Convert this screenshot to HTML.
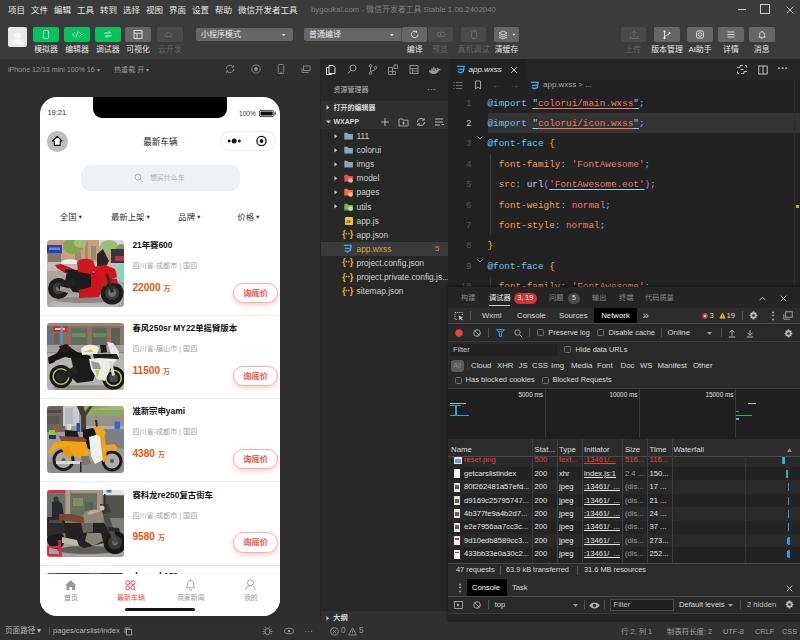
<!DOCTYPE html>
<html lang="zh-CN"><head><meta charset="utf-8"><title>微信开发者工具</title>
<style>
html,body{margin:0;padding:0;background:#2d2d2d;}
body{width:800px;height:640px;position:relative;overflow:hidden;font-family:"Liberation Sans","Noto Sans CJK SC",sans-serif;}
.r{position:absolute;display:block;}
.t{position:absolute;white-space:nowrap;}
.mono{font-family:"Liberation Mono","Noto Sans CJK SC",monospace;}
svg{overflow:visible}
</style></head><body>

<div class="r" style="left:0px;top:0px;width:800px;height:59px;background:#3b3b3b;"></div>
<div class="t" style="left:8px;top:4.00px;font-size:8.5px;line-height:12px;color:#e6e6e6;">项目</div>
<div class="t" style="left:31px;top:4.00px;font-size:8.5px;line-height:12px;color:#e6e6e6;">文件</div>
<div class="t" style="left:54px;top:4.00px;font-size:8.5px;line-height:12px;color:#e6e6e6;">编辑</div>
<div class="t" style="left:77px;top:4.00px;font-size:8.5px;line-height:12px;color:#e6e6e6;">工具</div>
<div class="t" style="left:100px;top:4.00px;font-size:8.5px;line-height:12px;color:#e6e6e6;">转到</div>
<div class="t" style="left:123px;top:4.00px;font-size:8.5px;line-height:12px;color:#e6e6e6;">选择</div>
<div class="t" style="left:146px;top:4.00px;font-size:8.5px;line-height:12px;color:#e6e6e6;">视图</div>
<div class="t" style="left:169px;top:4.00px;font-size:8.5px;line-height:12px;color:#e6e6e6;">界面</div>
<div class="t" style="left:192px;top:4.00px;font-size:8.5px;line-height:12px;color:#e6e6e6;">设置</div>
<div class="t" style="left:215px;top:4.00px;font-size:8.5px;line-height:12px;color:#e6e6e6;">帮助</div>
<div class="t" style="left:238px;top:4.00px;font-size:8.5px;line-height:12px;color:#e6e6e6;">微信开发者工具</div>
<div class="t" style="left:311px;top:4.00px;font-size:7.85px;line-height:12px;color:#808080;">bygoukai.com - 微信开发者工具 Stable 1.06.2402040</div>
<div class="r" style="left:738px;top:9px;width:8px;height:1px;background:#d0d0d0;"></div>
<div class="r" style="left:760px;top:4px;width:10px;height:10px;background:transparent;border:1px solid #d0d0d0;box-sizing:border-box;"></div>
<svg class="r" style="left:785.5px;top:5.5px;" width="8" height="8" viewBox="0 0 8 8"><path d="M0.5 0.5L7.5 7.5M7.5 0.5L0.5 7.5" stroke="#d0d0d0" stroke-width="0.9" fill="none"/></svg>
<div class="r" style="left:8px;top:27px;width:19px;height:20px;background:#e9e9e9;border-radius:2px;"></div>
<svg class="r" style="left:8px;top:27px;" width="19" height="20" viewBox="0 0 19 20"><circle cx="9.5" cy="8.5" r="3.2" fill="#f6f6f6"/><path d="M3 17.500c0-4 3-5.500 6.500-5.500S16 13.500 16 17.500z" fill="#f6f6f6"/></svg>
<div class="r" style="left:33px;top:27px;width:26px;height:15px;background:#07c160;border-radius:2px;"></div>
<svg class="r" style="left:33px;top:27px;" width="26" height="15" viewBox="0 0 26 15"><rect x="10.5" y="3.5" width="5" height="8" rx="1" fill="none" stroke="#fff" stroke-width="0.75"/></svg>
<div class="t" style="left:-104.0px;width:300px;text-align:center;top:43.50px;font-size:7.9px;line-height:12px;color:#e6e6e6;">模拟器</div>
<div class="r" style="left:64px;top:27px;width:26px;height:15px;background:#07c160;border-radius:2px;"></div>
<svg class="r" style="left:64px;top:27px;" width="26" height="15" viewBox="0 0 26 15"><path d="M10.5 5.5L8.5 7.5l2 2M15.5 5.5l2 2-2 2M14 4.5l-2 6" fill="none" stroke="#fff" stroke-width="0.75"/></svg>
<div class="t" style="left:-73.0px;width:300px;text-align:center;top:43.50px;font-size:7.9px;line-height:12px;color:#e6e6e6;">编辑器</div>
<div class="r" style="left:95px;top:27px;width:25.5px;height:15px;background:#07c160;border-radius:2px;"></div>
<svg class="r" style="left:95px;top:27px;" width="25.5" height="15" viewBox="0 0 25.5 15"><path d="M9.5 6h6M13.5 4.5l2 1.5M16.5 9h-6M12.5 10.5l-2-1.5" fill="none" stroke="#fff" stroke-width="0.75"/></svg>
<div class="t" style="left:-42.25px;width:300px;text-align:center;top:43.50px;font-size:7.9px;line-height:12px;color:#e6e6e6;">调试器</div>
<div class="r" style="left:125px;top:27px;width:26px;height:15px;background:#666666;border-radius:2px;"></div>
<svg class="r" style="left:125px;top:27px;" width="26" height="15" viewBox="0 0 26 15"><rect x="9" y="3.5" width="8" height="8" fill="none" stroke="#fff" stroke-width="0.75"/><path d="M9 6.3h8M12 6.3v5.2" stroke="#fff" stroke-width="0.75"/></svg>
<div class="t" style="left:-12.0px;width:300px;text-align:center;top:43.50px;font-size:7.9px;line-height:12px;color:#e6e6e6;">可视化</div>
<div class="r" style="left:157px;top:27px;width:26px;height:15px;background:#4a4a4a;border-radius:2px;"></div>
<svg class="r" style="left:157px;top:27px;" width="26" height="15" viewBox="0 0 26 15"><path d="M9.5 9.5c-1.5 0-1.8-2.3 0-2.5c.3-2 3-2.2 3.6-.5c1.8-.4 2.4 2.6.6 3z" fill="none" stroke="#777" stroke-width="0.7"/></svg>
<div class="t" style="left:20.0px;width:300px;text-align:center;top:43.50px;font-size:7.9px;line-height:12px;color:#666666;">云开发</div>
<div class="r" style="left:196px;top:27.6px;width:97px;height:13.8px;background:#666666;border-radius:2px;"></div>
<div class="t" style="left:201px;top:28.50px;font-size:8px;line-height:12px;color:#e6e6e6;">小程序模式</div>
<svg class="r" style="left:281.5px;top:33.5px;" width="3.6" height="2.2" viewBox="0 0 3.6 2.2"><path d="M0 0h3.6L1.8 2.2z" fill="#e6e6e6"/></svg>
<div class="r" style="left:304px;top:27.6px;width:97.4px;height:13.8px;background:#666666;border-radius:2px 0 0 2px;"></div>
<div class="r" style="left:401.4px;top:27.6px;width:0.6px;height:13.8px;background:#505050;"></div>
<div class="t" style="left:309px;top:28.50px;font-size:8px;line-height:12px;color:#e6e6e6;">普通编译</div>
<svg class="r" style="left:389.5px;top:33.5px;" width="3.6" height="2.2" viewBox="0 0 3.6 2.2"><path d="M0 0h3.6L1.8 2.2z" fill="#e6e6e6"/></svg>
<div class="r" style="left:402px;top:27px;width:25.3px;height:15px;background:#666666;border-radius:2px;"></div>
<svg class="r" style="left:402px;top:27px;" width="25.3" height="15" viewBox="0 0 25.3 15"><path d="M16 7.5a3.3 3.3 0 1 1-1.2-2.6" fill="none" stroke="#fff" stroke-width="0.75"/><path d="M14.2 3.6l1 1.6-1.8.4z" fill="#fff"/></svg>
<div class="t" style="left:264.65px;width:300px;text-align:center;top:43.50px;font-size:7.9px;line-height:12px;color:#e6e6e6;">编译</div>
<div class="r" style="left:427.5px;top:27px;width:25px;height:15px;background:#4a4a4a;border-radius:2px;"></div>
<svg class="r" style="left:427.5px;top:27px;" width="25" height="15" viewBox="0 0 25 15"><ellipse cx="13" cy="7.5" rx="4" ry="2.4" fill="none" stroke="#777" stroke-width="0.7"/><circle cx="13" cy="7.5" r="1" fill="#777"/></svg>
<div class="t" style="left:290.0px;width:300px;text-align:center;top:43.50px;font-size:7.9px;line-height:12px;color:#666666;">预览</div>
<div class="r" style="left:461px;top:27px;width:25px;height:15px;background:#4a4a4a;border-radius:2px;"></div>
<svg class="r" style="left:461px;top:27px;" width="25" height="15" viewBox="0 0 25 15"><rect x="10.5" y="4" width="5" height="7.5" rx="1" fill="none" stroke="#777" stroke-width="0.7"/><path d="M13 2.5v3" stroke="#777" stroke-width="0.7"/></svg>
<div class="t" style="left:323.5px;width:300px;text-align:center;top:43.50px;font-size:7.9px;line-height:12px;color:#666666;">真机调试</div>
<div class="r" style="left:494px;top:27px;width:25px;height:15px;background:#666666;border-radius:2px;"></div>
<svg class="r" style="left:494px;top:27px;" width="25" height="15" viewBox="0 0 25 15"><path d="M5 6l4-2 4 2-4 2zM5 8l4 2 4-2M5 10l4 2 4-2" fill="none" stroke="#fff" stroke-width="0.7"/><path d="M18.300 6.800h3.200l-1.600 2z" fill="#fff"/></svg>
<div class="t" style="left:356.5px;width:300px;text-align:center;top:43.50px;font-size:7.9px;line-height:12px;color:#e6e6e6;">清缓存</div>
<div class="r" style="left:620.5px;top:27px;width:25.5px;height:15px;background:#4a4a4a;border-radius:2px;"></div>
<svg class="r" style="left:620.5px;top:27px;" width="25.5" height="15" viewBox="0 0 25.5 15"><path d="M13 9.5v-5M11 6.2l2-2 2 2M9.5 9v2.5h7V9" fill="none" stroke="#777" stroke-width="0.7"/></svg>
<div class="t" style="left:483.25px;width:300px;text-align:center;top:43.50px;font-size:7.9px;line-height:12px;color:#666666;">上传</div>
<div class="r" style="left:654px;top:27px;width:26px;height:15px;background:#666666;border-radius:2px;"></div>
<svg class="r" style="left:654px;top:27px;" width="26" height="15" viewBox="0 0 26 15"><circle cx="10.5" cy="4.5" r="1" fill="#fff"/><circle cx="10.5" cy="11" r="1" fill="#fff"/><circle cx="15.5" cy="6" r="1" fill="#fff"/><path d="M10.5 4.5v6.5M15.5 6c0 2.5-5 2-5 4" fill="none" stroke="#fff" stroke-width="0.7"/></svg>
<div class="t" style="left:517.0px;width:300px;text-align:center;top:43.50px;font-size:7.9px;line-height:12px;color:#e6e6e6;">版本管理</div>
<div class="r" style="left:687px;top:27px;width:26px;height:15px;background:#666666;border-radius:2px;"></div>
<svg class="r" style="left:687px;top:27px;" width="26" height="15" viewBox="0 0 26 15"><rect x="9.5" y="4" width="7" height="7" rx="1.5" fill="none" stroke="#fff" stroke-width="0.75"/><circle cx="13" cy="7.5" r="1.8" fill="none" stroke="#fff" stroke-width="0.75"/></svg>
<div class="t" style="left:550.0px;width:300px;text-align:center;top:43.50px;font-size:7.9px;line-height:12px;color:#e6e6e6;">AI助手</div>
<div class="r" style="left:718px;top:27px;width:26px;height:15px;background:#666666;border-radius:2px;"></div>
<svg class="r" style="left:718px;top:27px;" width="26" height="15" viewBox="0 0 26 15"><path d="M9.5 5h7M9.5 7.5h7M9.5 10h7" stroke="#fff" stroke-width="0.75"/></svg>
<div class="t" style="left:581.0px;width:300px;text-align:center;top:43.50px;font-size:7.9px;line-height:12px;color:#e6e6e6;">详情</div>
<div class="r" style="left:749px;top:27px;width:25.5px;height:15px;background:#666666;border-radius:2px;"></div>
<svg class="r" style="left:749px;top:27px;" width="25.5" height="15" viewBox="0 0 25.5 15"><path d="M9.800 10.200c1.200-1 .6-3 1.200-4.300a2.200 2.200 0 0 1 4 0c.6 1.300 0 3.300 1.200 4.300z" fill="none" stroke="#fff" stroke-width="0.7"/><path d="M12.200 11.300a.9.900 0 0 0 1.600 0" fill="none" stroke="#fff" stroke-width="0.7"/></svg>
<div class="t" style="left:611.75px;width:300px;text-align:center;top:43.50px;font-size:7.9px;line-height:12px;color:#e6e6e6;">消息</div>
<div class="r" style="left:0px;top:59px;width:320px;height:21px;background:#2f2f2f;"></div>
<div class="t" style="left:8px;top:63.50px;font-size:7.1px;line-height:12px;color:#9a9a9a;">iPhone 12/13 mini 100% 16 <span style="font-size:6px">▾</span></div>
<div class="t" style="left:114px;top:63.50px;font-size:7.1px;line-height:12px;color:#9a9a9a;">热重载 开 <span style="font-size:6px">▾</span></div>
<svg class="r" style="left:224px;top:63px;" width="12" height="12" viewBox="0 0 12 12"><path d="M2.200 6a3.800 3.800 0 0 1 6.800-2.300M9.800 6a3.800 3.800 0 0 1-6.800 2.300" fill="none" stroke="#8c8c8c" stroke-width="0.9"/><path d="M9.600 2.200v2h-2M2.400 9.800v-2h2" fill="none" stroke="#8c8c8c" stroke-width="0.9"/></svg>
<svg class="r" style="left:250px;top:63px;" width="12" height="12" viewBox="0 0 12 12"><circle cx="6" cy="6" r="4.200" fill="none" stroke="#8c8c8c" stroke-width="0.9"/><circle cx="6" cy="6" r="1.900" fill="#8c8c8c"/></svg>
<svg class="r" style="left:275px;top:63px;" width="12" height="12" viewBox="0 0 12 12"><rect x="3.300" y="1.500" width="5.400" height="9" rx="1" fill="none" stroke="#8c8c8c" stroke-width="0.9"/><path d="M5 9.200h2" stroke="#8c8c8c" stroke-width="0.8"/></svg>
<svg class="r" style="left:300px;top:63px;" width="12" height="12" viewBox="0 0 12 12"><rect x="3.500" y="3" width="6.500" height="4.500" fill="none" stroke="#8c8c8c" stroke-width="0.9"/><path d="M2 5v4.500h6.500" fill="none" stroke="#8c8c8c" stroke-width="0.9"/></svg>
<div class="r" style="left:0px;top:80px;width:320px;height:542px;background:#2d2d2d;"></div>
<div class="r" id="phone" style="left:40.2px;top:97px;width:240px;height:519px;background:#fff;border-radius:17px;overflow:hidden;">
<div class="r" style="left:53.2px;top:-7px;width:134px;height:27.5px;background:#000;border-radius:9px;"></div>
<div class="t" style="left:7.200000000000003px;top:9.50px;font-size:7.5px;line-height:12px;color:#333;">19:21</div>
<div class="t" style="left:-84.30000000000001px;width:300px;text-align:right;top:10.50px;font-size:6.6px;line-height:12px;color:#333;">100%</div>
<svg class="r" style="left:219.2px;top:12.5px;" width="18" height="8" viewBox="0 0 18 8"><rect x="0.400" y="0.400" width="14.500" height="6.200" rx="1.500" fill="none" stroke="#222" stroke-width="0.8"/><rect x="1.600" y="1.600" width="12.100" height="3.800" rx="0.700" fill="#111"/><rect x="15.600" y="2.300" width="1.200" height="2.400" rx="0.500" fill="#222"/></svg>
<div class="r" style="left:7.200000000000003px;top:34px;width:20.5px;height:20.5px;background:#bdbdbd;border-radius:50%;"></div>
<svg class="r" style="left:7.200000000000003px;top:34px;" width="20.5" height="20.5" viewBox="0 0 20.5 20.5"><path d="M10.250 5.300l4.800 4.700h-1.900v4.400h-5.800v-4.400h-1.900z" fill="#fff" stroke="#111" stroke-width="1.100" stroke-linejoin="round"/></svg>
<div class="t" style="left:-29.799999999999997px;width:300px;text-align:center;top:38.50px;font-size:8.6px;line-height:12px;color:#222;">最新车辆</div>
<div class="r" style="left:180.2px;top:34px;width:56px;height:20px;background:#fff;border-radius:10px;border:1px solid #ebebeb;box-sizing:border-box;"></div>
<svg class="r" style="left:180.2px;top:34px;" width="56" height="20" viewBox="0 0 56 20"><circle cx="9.200" cy="10" r="1.500" fill="#111"/><circle cx="14.200" cy="10" r="2.500" fill="#111"/><circle cx="19.300" cy="10" r="1.500" fill="#111"/><circle cx="41.500" cy="10" r="4.600" fill="none" stroke="#111" stroke-width="1.300"/><circle cx="41.500" cy="10" r="1.900" fill="#111"/></svg>
<div class="r" style="left:41.2px;top:68px;width:159px;height:25.5px;background:#f0f1f5;border-radius:9px;"></div>
<svg class="r" style="left:93.7px;top:76px;" width="10" height="10" viewBox="0 0 10 10"><circle cx="4" cy="4" r="3" fill="none" stroke="#aaa" stroke-width="0.9"/><path d="M6.200 6.200l2.800 2.800" stroke="#aaa" stroke-width="0.9"/></svg>
<div class="t" style="left:109.7px;top:75.00px;font-size:7px;line-height:12px;color:#b0b0b0;">想买什么车</div>
<div class="t" style="left:-118.8px;width:300px;text-align:center;top:114.00px;font-size:8.4px;line-height:12px;color:#333;">全国<span style="font-size:5.5px;position:relative;top:-1px;margin-left:1px;">▼</span></div>
<div class="t" style="left:-59.3px;width:300px;text-align:center;top:114.00px;font-size:8.4px;line-height:12px;color:#333;">最新上架<span style="font-size:5.5px;position:relative;top:-1px;margin-left:1px;">▼</span></div>
<div class="t" style="left:-0.30000000000001137px;width:300px;text-align:center;top:114.00px;font-size:8.4px;line-height:12px;color:#333;">品牌<span style="font-size:5.5px;position:relative;top:-1px;margin-left:1px;">▼</span></div>
<div class="t" style="left:58.69999999999999px;width:300px;text-align:center;top:114.00px;font-size:8.4px;line-height:12px;color:#333;">价格<span style="font-size:5.5px;position:relative;top:-1px;margin-left:1px;">▼</span></div>
<svg class="r" style="left:7.200000000000003px;top:143.0px;border-radius:3px;overflow:hidden;" width="77" height="67" viewBox="0 0 77 67"><defs><filter id="b1" x="-5%" y="-5%" width="110%" height="110%"><feGaussianBlur stdDeviation="0.5"/></filter></defs><g filter="url(#b1)"><rect x="-2" y="-2" width="81" height="71" fill="#a9a5a2"/>
<rect x="-2" y="-2" width="81" height="27" fill="#c9a07c"/>
<rect x="38" y="2" width="3" height="20" fill="#a88a70"/><rect x="44" y="6" width="5" height="14" fill="#9a8674"/><rect x="28" y="12" width="6" height="10" fill="#9a8674"/>
<rect x="0" y="5" width="15" height="8.500" fill="#2b41b5"/><rect x="2" y="7.500" width="11" height="2.500" fill="#6f86e0"/>
<rect x="1" y="13.500" width="13" height="11" fill="#85756c"/>
<ellipse cx="26" cy="6" rx="10" ry="8" fill="#86a552"/><ellipse cx="33" cy="3" rx="6" ry="5" fill="#a2bf70"/>
<rect x="52" y="-2" width="27" height="8" fill="#cfd9e2"/>
<ellipse cx="62" cy="7" rx="9" ry="7" fill="#9dbd72"/><ellipse cx="74" cy="10" rx="5" ry="6" fill="#7f9f5a"/>
<rect x="-2" y="22" width="81" height="9" fill="#c4bbb1"/>
<ellipse cx="23" cy="23" rx="9" ry="3.800" fill="#ececec"/><rect x="16" y="24" width="14" height="2.500" fill="#b8b8b8"/>
<rect x="64" y="9" width="13" height="14" fill="#3a3340"/><rect x="68" y="16" width="9" height="5" fill="#b83040"/>
<rect x="70" y="24" width="9" height="18" rx="2" fill="#8fd0c2"/>
<ellipse cx="38" cy="64" rx="36" ry="5" fill="#bab6b3"/>
<ellipse cx="38" cy="60" rx="30" ry="3" fill="#8c8886"/>
<circle cx="11.500" cy="48.500" r="10.500" fill="#1a1a1a"/><circle cx="11.500" cy="48.500" r="6" fill="#3c3c3c"/><circle cx="11.500" cy="48.500" r="2.500" fill="#777"/>
<circle cx="65" cy="53" r="11.500" fill="#1a1a1a"/><circle cx="65" cy="53" r="7" fill="#3a3a3a"/><circle cx="65" cy="53" r="4" fill="#6e6e6e"/>
<path d="M20 31l10-1 18 3 4 16-6 5-20-2-8-10z" fill="#1d1a1b"/><path d="M10 46l16-8 4 6-16 8z" fill="#242224"/>
<path d="M8 25l6-1 8 3 8 4-2 3-10-1-8-5z" fill="#c5121c"/>
<path d="M18 29l12 1 6 3-6 3-12-4z" fill="#1b1b1d"/>
<path d="M30 22c4-4 12-4 16-1l3 8-6 5-12-2z" fill="#cf1822"/>
<path d="M50 14l6-5 6 12-4 7-8-2z" fill="#2a2226"/>
<path d="M46 27l12-2 10 4 2 8-6 2-6 8-4-6-6-6z" fill="#d0141e"/>
<path d="M44 33l10 2 2 10-4 12-20 1 0-8 12-3z" fill="#c9121b"/>
<path d="M62 38l8 1 1 5-8-1z" fill="#c8121c"/>
<path d="M59 36l3 0 5 16-3 1z" fill="#2a2a2a"/>
<path d="M13 46l11 3 1 5-12-3z" fill="#9a9896"/>
<circle cx="60" cy="35" r="1.500" fill="#333"/></g></svg>
<div class="t" style="left:92.2px;top:142.00px;font-size:8.4px;line-height:12px;color:#111;font-weight:700;">21年赛600</div>
<div class="t" style="left:92.2px;top:163.00px;font-size:7.1px;line-height:12px;color:#a2a2a2;">四川省-成都市 | 国四</div>
<div class="t" style="left:92.2px;top:184.50px;font-size:10.2px;line-height:12px;color:#e4570f;font-weight:700;">22000 <span style="font-size:7px;">万</span></div>
<div class="r" style="left:193.2px;top:185.5px;width:44.5px;height:20.5px;background:#fff;border-radius:10.5px;border:1px solid #f5b0ab;box-sizing:border-box;box-shadow:0 2px 4px rgba(229,77,66,.28);"></div>
<div class="t" style="left:65.39999999999998px;width:300px;text-align:center;top:189.80px;font-size:8.3px;line-height:12px;color:#e5534a;font-weight:700;">询底价</div>
<div class="r" style="left:0.20000000000000284px;top:218.0px;width:241px;height:0.6px;background:#e9e9e9;"></div>
<svg class="r" style="left:7.200000000000003px;top:226.2px;border-radius:3px;overflow:hidden;" width="77" height="67" viewBox="0 0 77 67"><defs><filter id="b2" x="-5%" y="-5%" width="110%" height="110%"><feGaussianBlur stdDeviation="0.5"/></filter></defs><g filter="url(#b2)"><rect x="-2" y="-2" width="81" height="71" fill="#b7b3ae"/>
<rect x="-2" y="-2" width="81" height="25" fill="#7c7069"/>
<rect x="-2" y="-2" width="81" height="5" fill="#9a8676"/>
<rect x="0" y="3" width="5" height="18" fill="#68727a"/>
<rect x="6" y="3" width="14.500" height="6" fill="#cf2f2f"/><rect x="8" y="5" width="10" height="2" fill="#f0c8c8"/>
<rect x="7" y="10" width="5" height="11" fill="#5d665c"/>
<rect x="13.500" y="-2" width="2.200" height="25" fill="#5b8fd6"/>
<rect x="17" y="9" width="4" height="12" fill="#8a6a58"/>
<rect x="24" y="5" width="16" height="17" fill="#636e5c"/><rect x="25" y="10" width="14" height="4" fill="#6f8a5e"/>
<rect x="41" y="3" width="3.500" height="19" fill="#8a7364"/>
<rect x="45" y="5" width="15" height="17" fill="#5f6a5a"/><rect x="46" y="10" width="13" height="4" fill="#6a845c"/>
<rect x="60.500" y="3" width="3.500" height="19" fill="#8a7364"/>
<rect x="64" y="5" width="9" height="17" fill="#5a6058"/>
<rect x="73" y="3" width="6" height="20" fill="#8a7a6c"/>
<rect x="60" y="13" width="2" height="4" fill="#d04a3a"/><rect x="20" y="13" width="2" height="6" fill="#c0503c"/>
<rect x="-2" y="22" width="81" height="7.500" fill="#a69f97"/><rect x="-2" y="29" width="81" height="1.200" fill="#8c867e"/>
<ellipse cx="40" cy="65" rx="34" ry="3" fill="#8f8c88"/>
<circle cx="14" cy="53.500" r="11.500" fill="#141414"/><circle cx="14" cy="53.500" r="7.800" fill="none" stroke="#aebb3a" stroke-width="1.600"/><circle cx="14" cy="53.500" r="5" fill="#2c2c2c"/>
<circle cx="66.500" cy="55" r="11.500" fill="#141414"/><circle cx="66.500" cy="55" r="7.800" fill="none" stroke="#c0cc3c" stroke-width="1.600"/><circle cx="66.500" cy="55" r="4.500" fill="#4a4a4a"/>
<path d="M1 34l5-1 2 6-5 2z" fill="#1a1a1a"/>
<path d="M1 36l3-3 6-3 4-6 6-2 4 3 6 4 10 2 4 3-4 4-12-2-10-2-10 4-6 3z" fill="#191919"/><path d="M24 35l20 0 6 11-4 12-16 2-8-8 4-8z" fill="#1c1c1c"/><path d="M13 51l15-8 3 7-15 7z" fill="#232323"/>
<path d="M12 23l8-2 4 4-2 4-8-1z" fill="#1c1c1c"/>
<path d="M34 26c3-5 14-6 18-1l-2 6-15 1z" fill="#eeeeea"/><path d="M36 29l8-3 2 3z" fill="#c8d23c"/>
<path d="M53 22l6 0 1 7-6 1z" fill="#1c1c1c"/>
<path d="M60 19l6 1 6 9 0 6-8-4z" fill="#e4e8ea"/>
<path d="M46 31l24 0 2 5-24 4z" fill="#1b1b1b"/>
<path d="M42 36l10-1 18 1-6 8-6 14-8-2-6-10z" fill="#ebebe8"/>
<path d="M48 47l5-1-3 9z" fill="#c6d03a"/>

<path d="M62 38l3 0 3 14-3 1z" fill="#d8d8d8"/>
<path d="M44 38l8 2 2 6-8 0z" fill="#9a9a98"/></g></svg>
<div class="t" style="left:92.2px;top:225.20px;font-size:8.4px;line-height:12px;color:#111;font-weight:700;">春风250sr MY22单摇臂版本</div>
<div class="t" style="left:92.2px;top:246.20px;font-size:7.1px;line-height:12px;color:#a2a2a2;">四川省-眉山市 | 国四</div>
<div class="t" style="left:92.2px;top:267.70px;font-size:10.2px;line-height:12px;color:#e4570f;font-weight:700;">11500 <span style="font-size:7px;">万</span></div>
<div class="r" style="left:193.2px;top:268.7px;width:44.5px;height:20.5px;background:#fff;border-radius:10.5px;border:1px solid #f5b0ab;box-sizing:border-box;box-shadow:0 2px 4px rgba(229,77,66,.28);"></div>
<div class="t" style="left:65.39999999999998px;width:300px;text-align:center;top:273.00px;font-size:8.3px;line-height:12px;color:#e5534a;font-weight:700;">询底价</div>
<div class="r" style="left:0.20000000000000284px;top:301.2px;width:241px;height:0.6px;background:#e9e9e9;"></div>
<svg class="r" style="left:7.200000000000003px;top:309.4px;border-radius:3px;overflow:hidden;" width="77" height="67" viewBox="0 0 77 67"><defs><filter id="b3" x="-5%" y="-5%" width="110%" height="110%"><feGaussianBlur stdDeviation="0.5"/></filter></defs><g filter="url(#b3)"><rect x="-2" y="-2" width="81" height="71" fill="#9f9c99"/>
<rect x="-2" y="-2" width="20" height="28" fill="#6b6460"/><rect x="0" y="4" width="14" height="3" fill="#4e4844"/><rect x="0" y="10" width="12" height="8" fill="#5a5450"/>
<rect x="16" y="-2" width="16" height="22" fill="#c8ccd0"/><rect x="18" y="2" width="8" height="16" fill="#b4b8bc"/>
<rect x="36" y="-2" width="43" height="14" fill="#8ea664"/><path d="M40 4l39-6v6z" fill="#a2b87a"/>
<rect x="38" y="10" width="41" height="13" fill="#9a9088"/><rect x="38" y="20" width="41" height="3" fill="#b0aca6"/>
<path d="M29 -2h7l2 8 6-8h3l-8 12v16h-5v-16z" fill="#463c36"/>
<rect x="29.500" y="17" width="3.500" height="9" fill="#2450b0"/>
<rect x="67.500" y="15.500" width="5.500" height="7.500" rx="1" fill="#2a68d4"/>
<path d="M44 23h35v20l-18-2z" fill="#7b7e88"/>
<rect x="-2" y="56" width="81" height="13" fill="#8d8b89"/>
<circle cx="9" cy="23" r="3.500" fill="#9a5a3c"/><rect x="2" y="24" width="6" height="6" rx="1" fill="#8ccc3c"/><rect x="2" y="29" width="7" height="4" fill="#2a3450"/>
<ellipse cx="22" cy="21" rx="2.500" ry="3" fill="#d8d8d8"/>
<path d="M18 24l12 1 2 6-14 0z" fill="#1a1a1a"/>
<path d="M36 24l10-2 4 6 0 10-6 6-8-4z" fill="#161616"/>
<circle cx="16.500" cy="54" r="11" fill="#1f1f1f"/><circle cx="16.500" cy="54" r="8" fill="#a8a8a6"/><circle cx="16.500" cy="54" r="2" fill="#555"/>
<circle cx="65" cy="55" r="10.500" fill="#1f1f1f"/><circle cx="65" cy="55" r="7.500" fill="#acacaa"/><circle cx="65" cy="55" r="2" fill="#555"/>
<path d="M12 30l24 1 4 3-2 3-24-2z" fill="#86483a"/>
<path d="M1 46l6-9 10-2 22 1 3 12-4 4-12-2-6-8-10 0-6 6z" fill="#f2a416"/>
<path d="M14 42l8-2 4 10-6 2z" fill="#e8980e"/>
<path d="M42 31l10-3 4 8 0 18-8 4-4-8z" fill="#efefed"/>
<path d="M47 20l8 1 4 6-2 4-8-2z" fill="#f2a416"/>
<path d="M53 30l5-1 2 26-4 1z" fill="#eea014"/>
<path d="M55 40l12-2 4 4-2 3-12-1z" fill="#f2a416"/>
<path d="M48 14l2 0 1 6-2 1z" fill="#2a2a2a"/>
<path d="M34 50l8 0 2 8-8 1z" fill="#767674"/>
<path d="M9 55l24 0 0 3-24 0z" fill="#d6d6d4"/>
<rect x="33" y="56" width="1.500" height="10" fill="#222"/></g></svg>
<div class="t" style="left:92.2px;top:308.40px;font-size:8.4px;line-height:12px;color:#111;font-weight:700;">准新宗申yami</div>
<div class="t" style="left:92.2px;top:329.40px;font-size:7.1px;line-height:12px;color:#a2a2a2;">四川省-成都市 | 国四</div>
<div class="t" style="left:92.2px;top:350.90px;font-size:10.2px;line-height:12px;color:#e4570f;font-weight:700;">4380 <span style="font-size:7px;">万</span></div>
<div class="r" style="left:193.2px;top:351.9px;width:44.5px;height:20.5px;background:#fff;border-radius:10.5px;border:1px solid #f5b0ab;box-sizing:border-box;box-shadow:0 2px 4px rgba(229,77,66,.28);"></div>
<div class="t" style="left:65.39999999999998px;width:300px;text-align:center;top:356.20px;font-size:8.3px;line-height:12px;color:#e5534a;font-weight:700;">询底价</div>
<div class="r" style="left:0.20000000000000284px;top:384.4px;width:241px;height:0.6px;background:#e9e9e9;"></div>
<svg class="r" style="left:7.200000000000003px;top:392.6px;border-radius:3px;overflow:hidden;" width="77" height="67" viewBox="0 0 77 67"><defs><filter id="b4" x="-5%" y="-5%" width="110%" height="110%"><feGaussianBlur stdDeviation="0.5"/></filter></defs><g filter="url(#b4)"><rect x="-2" y="-2" width="81" height="71" fill="#908e8a"/>
<rect x="-2" y="-2" width="81" height="31" fill="#76776a"/>
<rect x="-2" y="-2" width="20" height="5" fill="#de2f3b"/>
<rect x="0" y="4" width="18" height="24" fill="#69726a"/>
<rect x="18.500" y="-2" width="4.500" height="31" fill="#b49d88"/>
<rect x="24" y="4" width="26" height="22" fill="#66705e"/><rect x="26" y="8" width="10" height="8" fill="#7d9068"/><rect x="38" y="12" width="8" height="8" fill="#58604f"/>
<rect x="24" y="0" width="26" height="3" fill="#a8957f"/>
<rect x="50" y="-2" width="5.500" height="31" fill="#a8957f"/>
<rect x="56" y="-2" width="23" height="7" fill="#dfe3e6"/><rect x="59.500" y="-1" width="5" height="3.500" rx="1" fill="#2f6fe2"/>
<rect x="56" y="6" width="23" height="23" fill="#50524a"/>
<rect x="-2" y="28" width="81" height="24" fill="#7e7c78"/>
<rect x="-2" y="52" width="81" height="17" fill="#a5a39f"/>
<ellipse cx="40" cy="60" rx="30" ry="4" fill="#5e5c5a"/>
<path d="M5 12l6-2 4 4 2 12-12 2z" fill="#2a2a2e"/><circle cx="9" cy="9" r="2.500" fill="#3a3430"/>
<circle cx="68" cy="52.500" r="11.500" fill="#181818"/><circle cx="68" cy="52.500" r="7" fill="#3a3834"/><circle cx="68" cy="52.500" r="3" fill="#6a665e"/>
<circle cx="9" cy="50" r="9" fill="#1a1a1a"/>
<path d="M0 27l16 0 2 4 0 12-18 3z" fill="#2b2b2a"/><path d="M2 30l13 0 0 3-13 0z" fill="#4a4a48"/>
<path d="M12 24l12 0 12 3 4 2-4 4-24-3z" fill="#7b4433"/>
<path d="M36 25c4-7 18-8 22-1l-2 8-18 1z" fill="#8f8877"/><path d="M40 23c4-3 10-4 14-2l-12 4z" fill="#b8b09e"/>
<path d="M53 14l8 0 3 8-8 3z" fill="#3a3836"/><circle cx="55" cy="18" r="2.500" fill="#c8c4bc"/>
<path d="M17 33l40 0 6 8-6 12-20 5-18-8z" fill="#222120"/>
<path d="M34 33l12 0 0 9-10 1z" fill="#68655a"/>
<path d="M40 43l14 0 2 8-10 5-8-5z" fill="#86827a"/>
<path d="M15 47l15 3 2 6-17-3z" fill="#bcb8b0"/>
<path d="M56 25l6 1 9 26-4 1-9-19z" fill="#4e4c48"/>
<path d="M61 37l11 1 1 4-11-1z" fill="#2c2c2c"/>
<path d="M57 4l1.500 0 0 12-1.500 0z" fill="#2a2a2a"/>
<path d="M11 50l2.500 0 1.500 14-3 0z" fill="#e02a36"/>
<path d="M0 56l12 0 0 2-12 0zM0 64l15 0 0 2.500-15 0z" fill="#e02a36"/>
<path d="M0 56l2 0 0 10-2 0z" fill="#e02a36"/></g></svg>
<div class="t" style="left:92.2px;top:391.60px;font-size:8.4px;line-height:12px;color:#111;font-weight:700;">赛科龙re250复古街车</div>
<div class="t" style="left:92.2px;top:412.60px;font-size:7.1px;line-height:12px;color:#a2a2a2;">四川省-成都市 | 国四</div>
<div class="t" style="left:92.2px;top:434.10px;font-size:10.2px;line-height:12px;color:#e4570f;font-weight:700;">9580 <span style="font-size:7px;">万</span></div>
<div class="r" style="left:193.2px;top:435.1px;width:44.5px;height:20.5px;background:#fff;border-radius:10.5px;border:1px solid #f5b0ab;box-sizing:border-box;box-shadow:0 2px 4px rgba(229,77,66,.28);"></div>
<div class="t" style="left:65.39999999999998px;width:300px;text-align:center;top:439.40px;font-size:8.3px;line-height:12px;color:#e5534a;font-weight:700;">询底价</div>
<div class="r" style="left:0.20000000000000284px;top:467.6px;width:241px;height:0.6px;background:#e9e9e9;"></div>
<svg class="r" style="left:7.200000000000003px;top:475.79999999999995px;border-radius:3px;overflow:hidden;" width="77" height="67" viewBox="0 0 77 67"><rect width="77" height="67" fill="#4a3c3a"/><rect x="0" y="0" width="10" height="4" fill="#e0383f"/><rect x="42" y="0" width="12" height="4" fill="#d03a40"/></svg>
<div class="t" style="left:92.2px;top:473.40px;font-size:8.4px;line-height:12px;color:#111;font-weight:700;">dayun k150</div>
<div class="t" style="left:92.2px;top:495.80px;font-size:7.1px;line-height:12px;color:#a2a2a2;">四川省-成都市 | 国四</div>
<div class="t" style="left:92.2px;top:517.30px;font-size:10.2px;line-height:12px;color:#e4570f;font-weight:700;">6800 <span style="font-size:7px;">万</span></div>
<div class="r" style="left:193.2px;top:518.3px;width:44.5px;height:20.5px;background:#fff;border-radius:10.5px;border:1px solid #f5b0ab;box-sizing:border-box;box-shadow:0 2px 4px rgba(229,77,66,.28);"></div>
<div class="t" style="left:65.39999999999998px;width:300px;text-align:center;top:522.60px;font-size:8.3px;line-height:12px;color:#e5534a;font-weight:700;">询底价</div>
<div class="r" style="left:-1.7999999999999972px;top:477.29999999999995px;width:244px;height:42px;background:#fff;box-shadow:0 -0.5px 1.5px rgba(0,0,0,.22);"></div>
<div class="t" style="left:-119.3px;width:300px;text-align:center;top:495.00px;font-size:7.0px;line-height:12px;color:#8a8a8a;">首页</div>
<div class="t" style="left:-59.3px;width:300px;text-align:center;top:495.00px;font-size:7.0px;line-height:12px;color:#e54d42;">最新车辆</div>
<div class="t" style="left:0.6999999999999886px;width:300px;text-align:center;top:495.00px;font-size:7.0px;line-height:12px;color:#9a9a9a;">商家新闻</div>
<div class="t" style="left:60.69999999999999px;width:300px;text-align:center;top:495.00px;font-size:7.0px;line-height:12px;color:#9a9a9a;">我的</div>
<svg class="r" style="left:24.700000000000003px;top:482.5px;" width="11.5" height="10.5" viewBox="0 0 11.5 10.5"><path d="M5.75 0.3l5.5 4.6-.5.7-.7-.5v5.2h-3v-3.300h-2.600v3.300h-3v-5.200l-.7.5-.5-.7z" fill="#9a9a9a"/></svg>
<svg class="r" style="left:85.2px;top:482.5px;" width="11" height="10.5" viewBox="0 0 11 10.5"><circle cx="2.700" cy="2.700" r="2" fill="none" stroke="#e54d42" stroke-width="1"/><circle cx="8" cy="2.700" r="2" fill="none" stroke="#e54d42" stroke-width="1"/><circle cx="2.700" cy="7.800" r="2" fill="none" stroke="#e54d42" stroke-width="1"/><circle cx="7.700" cy="7.500" r="1.800" fill="none" stroke="#e54d42" stroke-width="1"/><path d="M9 8.800l1.500 1.500" stroke="#e54d42" stroke-width="1"/></svg>
<svg class="r" style="left:145.2px;top:482px;" width="11" height="11.5" viewBox="0 0 11 11.5"><path d="M1.200 8.800c1.600-1.100 .9-3.500 1.500-5.200a2.900 2.900 0 0 1 5.600 0c.6 1.700-.1 4.100 1.500 5.200z" fill="none" stroke="#9a9a9a" stroke-width="0.9"/><path d="M4.300 10.200a1.200 1.200 0 0 0 2.400 0M5.500 0.300v1.200" fill="none" stroke="#9a9a9a" stroke-width="0.9"/></svg>
<svg class="r" style="left:205.2px;top:482px;" width="11" height="11.5" viewBox="0 0 11 11.5"><circle cx="5.500" cy="3.800" r="3" fill="none" stroke="#9a9a9a" stroke-width="0.9"/><path d="M0.800 11c.3-2.600 1.800-4 4.700-4.200M10.200 11c-.2-1.700-.9-2.900-2.100-3.600" fill="none" stroke="#9a9a9a" stroke-width="0.9"/></svg>
<div class="r" style="left:85.2px;top:511.29999999999995px;width:70px;height:2.8px;background:#111;border-radius:1.5px;"></div>
</div>
<div class="r" style="left:0px;top:622px;width:320px;height:18px;background:#2f2f2f;"></div>
<div class="t" style="left:5px;top:625.00px;font-size:7.6px;line-height:12px;color:#b5b5b5;">页面路径 ▾</div>
<div class="r" style="left:48.5px;top:627px;width:0.6px;height:8px;background:#555;"></div>
<div class="t" style="left:53px;top:625.00px;font-size:7.6px;line-height:12px;color:#b5b5b5;">pages/carslist/index</div>
<svg class="r" style="left:124px;top:626.5px;" width="9" height="9" viewBox="0 0 9 9"><rect x="2.500" y="2.500" width="5" height="5.500" fill="none" stroke="#b5b5b5" stroke-width="0.8"/><path d="M1 6.500v-5.500h5" fill="none" stroke="#b5b5b5" stroke-width="0.8"/></svg>
<svg class="r" style="left:262px;top:626px;" width="11" height="10" viewBox="0 0 11 10"><ellipse cx="5.500" cy="5.500" rx="2.400" ry="3.200" fill="none" stroke="#9a9a9a" stroke-width="0.8"/><path d="M1 3l2 1M1 8l2-1M10 3l-2 1M10 8l-2-1M.5 5.500h2.500M8 5.500h2.500M4 2l-1-1.500M7 2l1-1.500" stroke="#9a9a9a" stroke-width="0.7"/></svg>
<svg class="r" style="left:283px;top:626px;" width="12" height="10" viewBox="0 0 12 10"><ellipse cx="6" cy="5" rx="4.600" ry="2.800" fill="none" stroke="#9a9a9a" stroke-width="0.8"/><circle cx="6" cy="5" r="1.200" fill="#9a9a9a"/></svg>
<div class="t" style="left:304px;top:624.50px;font-size:9px;line-height:12px;color:#9a9a9a;">···</div>
<div class="r" style="left:320px;top:59px;width:480px;height:581px;background:#222222;"></div>
<div class="r" style="left:320px;top:59px;width:480px;height:21px;background:#262626;"></div>
<div class="r" style="left:320px;top:59px;width:1px;height:581px;background:#242424;"></div>
<svg class="r" style="left:325px;top:63px;" width="12" height="13" viewBox="0 0 12 13"><path d="M4 2.500h4l2 2v6h-6z" fill="none" stroke="#e6e6e6" stroke-width="1"/><path d="M4 4.500h-2.500v7h5v-1" fill="none" stroke="#e6e6e6" stroke-width="1"/></svg>
<svg class="r" style="left:346px;top:63px;" width="12" height="13" viewBox="0 0 12 13"><circle cx="7" cy="5" r="3" fill="none" stroke="#9a9a9a" stroke-width="1"/><path d="M4.800 7.200l-3 3.300" stroke="#9a9a9a" stroke-width="1"/></svg>
<svg class="r" style="left:367px;top:63px;" width="12" height="13" viewBox="0 0 12 13"><circle cx="3.500" cy="2.800" r="1.300" fill="none" stroke="#9a9a9a" stroke-width="0.9"/><circle cx="3.500" cy="10.200" r="1.300" fill="none" stroke="#9a9a9a" stroke-width="0.9"/><circle cx="8.500" cy="4.800" r="1.300" fill="none" stroke="#9a9a9a" stroke-width="0.9"/><path d="M3.500 4.100v4.800M8.500 6.100c0 2-5 1.400-5 2.800" fill="none" stroke="#9a9a9a" stroke-width="0.9"/></svg>
<svg class="r" style="left:387px;top:63px;" width="12" height="13" viewBox="0 0 12 13"><path d="M1.500 4.500h4v4h-4zM1.500 8.500v3h4v-3M5.500 8.500h3v3h-3M7 2h3.500v3.500h-3.500z" fill="none" stroke="#9a9a9a" stroke-width="0.9"/></svg>
<svg class="r" style="left:408px;top:63px;" width="12" height="13" viewBox="0 0 12 13"><rect x="2" y="2.500" width="8" height="8" fill="none" stroke="#9a9a9a" stroke-width="0.9"/><path d="M2 5.500h8M4.500 5.500v5M4.500 8h5.500" stroke="#9a9a9a" stroke-width="0.8"/></svg>
<svg class="r" style="left:428px;top:63px;" width="13" height="13" viewBox="0 0 13 13"><path d="M1 7.500c0 2.500 2 3.500 4.500 3.500c3 0 4.800-1.600 5.500-3.500c1 0 1.600-.5 1.800-1.200c-.7-.4-1.500-.3-2 0c-.1-.8-.6-1.400-1.200-1.700c-.5.600-.6 1.500-.2 2.200c-.5.400-1.200.500-2.400.5h-5.800z" fill="#9a9a9a"/><path d="M3 5.500h5v1.300h-5zM5 4h1.500v1.300h-1.500z" fill="#9a9a9a"/></svg>
<div class="r" style="left:448.5px;top:59px;width:77px;height:21px;background:#222222;"></div>
<svg class="r" style="left:455.5px;top:65px;" width="9.0" height="9.0" viewBox="0 0 9 9"><path d="M0.800 1.300h7.400l-.9 5.300-2.800 1.100-2.800-1.100M1.900 4.300h5.700" fill="none" stroke="#42a5f5" stroke-width="1.350" stroke-linejoin="miter"/></svg>
<div class="t" style="left:468.5px;top:63.50px;font-size:8.0px;line-height:12px;color:#e8e8e8;font-style:italic;">app.wxss</div>
<svg class="r" style="left:510px;top:65.5px;" width="8" height="8" viewBox="0 0 8 8"><path d="M1.200 1.200l5.600 5.600M6.800 1.200l-5.600 5.600" stroke="#e0e0e0" stroke-width="0.9"/></svg>
<svg class="r" style="left:735px;top:63px;" width="14" height="13" viewBox="0 0 14 13"><path d="M2 4.500h3v-2h3M10 2.500h1.500v2M12 8.500h-3v2h-3M4 10.500h-1.500v-2" fill="none" stroke="#d0d0d0" stroke-width="0.9"/><path d="M5.500 6.500h3" stroke="#d0d0d0" stroke-width="0.9"/></svg>
<svg class="r" style="left:757px;top:63.5px;" width="12" height="12" viewBox="0 0 12 12"><rect x="1.800" y="2" width="8.400" height="8" fill="none" stroke="#d0d0d0" stroke-width="0.9"/><path d="M6 2v8" stroke="#d0d0d0" stroke-width="0.9"/></svg>
<div class="t" style="left:777.5px;top:63.00px;font-size:10px;line-height:12px;color:#d0d0d0;font-weight:700;letter-spacing:0.3px;">···</div>
<div class="r" style="left:321px;top:80px;width:126.5px;height:544px;background:#272727;"></div>
<div class="r" style="left:321px;top:100.5px;width:126.5px;height:28px;background:#2f2f2f;"></div>
<div class="t" style="left:333.5px;top:83.50px;font-size:7.0px;line-height:12px;color:#bbbbbb;">资源管理器</div>
<div class="t" style="left:427px;top:83.00px;font-size:8.5px;line-height:12px;color:#bbbbbb;">···</div>
<svg class="r" style="left:326px;top:105.0px;" width="4.0" height="5.0" viewBox="0 0 4 5"><path d="M0.500 0l3 2.500-3 2.500z" fill="#c5c5c5"/></svg>
<div class="t" style="left:333.5px;top:101.50px;font-size:7.0px;line-height:12px;color:#d8d8d8;font-weight:700;">打开的编辑器</div>
<svg class="r" style="left:325.5px;top:119.7px;" width="5" height="4" viewBox="0 0 5 4"><path d="M0 0.500h5l-2.500 3z" fill="#c5c5c5"/></svg>
<div class="t" style="left:333.5px;top:115.70px;font-size:7.0px;line-height:12px;color:#d8d8d8;font-weight:700;">WXAPP</div>
<svg class="r" style="left:380px;top:116.5px;" width="10" height="10" viewBox="0 0 10 10"><path d="M5 1v8M1 5h8" stroke="#c5c5c5" stroke-width="0.9"/></svg>
<svg class="r" style="left:398px;top:116.5px;" width="11" height="10" viewBox="0 0 11 10"><path d="M1 2h3.500l1 1.200h4.500v5.800h-9z" fill="none" stroke="#c5c5c5" stroke-width="0.8"/><path d="M5.500 4.500v3M4 6h3" stroke="#c5c5c5" stroke-width="0.8"/></svg>
<svg class="r" style="left:416px;top:116.5px;" width="10" height="10" viewBox="0 0 10 10"><path d="M1.500 5a3.500 3.500 0 0 1 6.200-2.200M8.500 5a3.500 3.500 0 0 1-6.200 2.200" fill="none" stroke="#c5c5c5" stroke-width="0.9"/><path d="M8.200 1v2.200h-2.200M1.800 9v-2.200h2.200" fill="none" stroke="#c5c5c5" stroke-width="0.8"/></svg>
<svg class="r" style="left:434px;top:116.5px;" width="10" height="10" viewBox="0 0 10 10"><path d="M1 2h8M1 5h8M1 8h5" stroke="#c5c5c5" stroke-width="0.9"/><path d="M7.500 7.500h2.500M8.700 7.500" stroke="#c5c5c5" stroke-width="0.9"/></svg>
<svg class="r" style="left:334px;top:133.75px;" width="3.6" height="4.5" viewBox="0 0 4 5"><path d="M0.500 0l3 2.500-3 2.500z" fill="#c5c5c5"/></svg>
<svg class="r" style="left:343.5px;top:132.0px;" width="9.2" height="8" viewBox="0 0 9.2 8"><path d="M0.300 0.800h3.200l0.900 1.100h4.500v5.600h-8.600z" fill="#8ea4b4"/></svg>
<div class="t" style="left:356.5px;top:130.00px;font-size:8.4px;line-height:12px;color:#d0d0d0;">111</div>
<svg class="r" style="left:334px;top:147.85px;" width="3.6" height="4.5" viewBox="0 0 4 5"><path d="M0.500 0l3 2.500-3 2.500z" fill="#c5c5c5"/></svg>
<svg class="r" style="left:343.5px;top:146.1px;" width="9.2" height="8" viewBox="0 0 9.2 8"><path d="M0.300 0.800h3.200l0.900 1.100h4.500v5.600h-8.600z" fill="#8ea4b4"/></svg>
<div class="t" style="left:356.5px;top:144.10px;font-size:8.4px;line-height:12px;color:#d0d0d0;">colorui</div>
<svg class="r" style="left:334px;top:161.95px;" width="3.6" height="4.5" viewBox="0 0 4 5"><path d="M0.500 0l3 2.500-3 2.500z" fill="#c5c5c5"/></svg>
<svg class="r" style="left:343.5px;top:160.2px;" width="9.2" height="8" viewBox="0 0 9.2 8"><path d="M0.300 0.800h3.200l0.900 1.100h4.500v5.600h-8.600z" fill="#8ea4b4"/></svg>
<div class="t" style="left:356.5px;top:158.20px;font-size:8.4px;line-height:12px;color:#d0d0d0;">imgs</div>
<svg class="r" style="left:334px;top:176.05px;" width="3.6" height="4.5" viewBox="0 0 4 5"><path d="M0.500 0l3 2.500-3 2.500z" fill="#c5c5c5"/></svg>
<svg class="r" style="left:343.5px;top:174.3px;" width="9.2" height="8" viewBox="0 0 9.2 8"><path d="M0.300 0.800h3.200l0.900 1.100h4.500v5.600h-8.600z" fill="#e5534b"/></svg>
<svg class="r" style="left:347.6px;top:177.60000000000002px;" width="5" height="5" viewBox="0 0 5 5"><circle cx="2.500" cy="2.500" r="2.300" fill="#f7b0a8"/></svg>
<div class="t" style="left:356.5px;top:172.30px;font-size:8.4px;line-height:12px;color:#d0d0d0;">model</div>
<svg class="r" style="left:334px;top:190.15px;" width="3.6" height="4.5" viewBox="0 0 4 5"><path d="M0.500 0l3 2.500-3 2.500z" fill="#c5c5c5"/></svg>
<svg class="r" style="left:343.5px;top:188.4px;" width="9.2" height="8" viewBox="0 0 9.2 8"><path d="M0.300 0.800h3.200l0.900 1.100h4.500v5.600h-8.600z" fill="#f0733c"/></svg>
<svg class="r" style="left:347.6px;top:191.70000000000002px;" width="5" height="5" viewBox="0 0 5 5"><circle cx="2.500" cy="2.500" r="2.300" fill="#f9c0a0"/></svg>
<div class="t" style="left:356.5px;top:186.40px;font-size:8.4px;line-height:12px;color:#d0d0d0;">pages</div>
<svg class="r" style="left:334px;top:204.25px;" width="3.6" height="4.5" viewBox="0 0 4 5"><path d="M0.500 0l3 2.500-3 2.500z" fill="#c5c5c5"/></svg>
<svg class="r" style="left:343.5px;top:202.5px;" width="9.2" height="8" viewBox="0 0 9.2 8"><path d="M0.300 0.800h3.200l0.900 1.100h4.500v5.600h-8.600z" fill="#7cb342"/></svg>
<svg class="r" style="left:347.6px;top:205.8px;" width="5" height="5" viewBox="0 0 5 5"><circle cx="2.500" cy="2.500" r="2.300" fill="#c5e1a5"/></svg>
<div class="t" style="left:356.5px;top:200.50px;font-size:8.4px;line-height:12px;color:#d0d0d0;">utils</div>
<div class="r" style="left:344.5px;top:216.6px;width:8px;height:8px;background:#f2c037;border-radius:1px;"></div>
<div class="t" style="left:346px;top:218.60px;font-size:3.8px;line-height:6px;color:#444;font-weight:700;">JS</div>
<div class="t" style="left:356.5px;top:214.60px;font-size:8.4px;line-height:12px;color:#d0d0d0;">app.js</div>
<div class="t" style="left:342.3px;top:228.20px;font-size:9px;line-height:12px;color:#e8b730;font-weight:700;letter-spacing:-0.7px;">{··}</div>
<div class="t" style="left:356.5px;top:228.70px;font-size:8.4px;line-height:12px;color:#d0d0d0;">app.json</div>
<div class="r" style="left:321px;top:242.0px;width:126.5px;height:13.7px;background:#3a3a3a;"></div>
<svg class="r" style="left:343px;top:244.3px;" width="9.0" height="9.0" viewBox="0 0 9 9"><path d="M0.800 1.300h7.400l-.9 5.300-2.800 1.100-2.800-1.100M1.900 4.300h5.700" fill="none" stroke="#42a5f5" stroke-width="1.350" stroke-linejoin="miter"/></svg>
<div class="t" style="left:356.5px;top:242.80px;font-size:8.4px;line-height:12px;color:#d3a734;">app.wxss</div>
<div class="t" style="left:435px;top:242.80px;font-size:8px;line-height:12px;color:#c79a2a;">5</div>
<div class="t" style="left:342.3px;top:256.40px;font-size:9px;line-height:12px;color:#e8b730;font-weight:700;letter-spacing:-0.7px;">{··}</div>
<div class="t" style="left:356.5px;top:256.90px;font-size:8.4px;line-height:12px;color:#d0d0d0;">project.config.json</div>
<div class="t" style="left:342.3px;top:270.50px;font-size:9px;line-height:12px;color:#e8b730;font-weight:700;letter-spacing:-0.7px;">{··}</div>
<div class="t" style="left:356.5px;top:271.00px;font-size:8.4px;line-height:12px;color:#d0d0d0;">project.private.config.js...</div>
<div class="t" style="left:342.3px;top:284.60px;font-size:9px;line-height:12px;color:#e8b730;font-weight:700;letter-spacing:-0.7px;">{··}</div>
<div class="t" style="left:356.5px;top:285.10px;font-size:8.4px;line-height:12px;color:#d0d0d0;">sitemap.json</div>
<div class="r" style="left:321px;top:611px;width:126.5px;height:13px;background:#303030;"></div>
<svg class="r" style="left:326px;top:615.55px;" width="3.6" height="4.5" viewBox="0 0 4 5"><path d="M0.500 0l3 2.500-3 2.500z" fill="#c5c5c5"/></svg>
<div class="t" style="left:333px;top:611.80px;font-size:7.4px;line-height:12px;color:#d8d8d8;font-weight:700;">大纲</div>
<div class="r" style="left:447.5px;top:80px;width:352.5px;height:209px;background:#222222;"></div>
<svg class="r" style="left:453px;top:80.5px;" width="10" height="9" viewBox="0 0 10 9"><path d="M0.500 1.500h1M3 1.500h6.500M0.500 4.500h1M3 4.500h6.500M0.500 7.500h1M3 7.500h6.500" stroke="#7a7a7a" stroke-width="0.9"/></svg>
<svg class="r" style="left:474px;top:80px;" width="8" height="10" viewBox="0 0 8 10"><path d="M1.500 1h5v8l-2.500-2-2.500 2z" fill="none" stroke="#b0b0b0" stroke-width="0.9"/></svg>
<div class="t" style="left:492px;top:78.60px;font-size:10px;line-height:12px;color:#5a5a5a;">←</div>
<div class="t" style="left:509.5px;top:78.60px;font-size:10px;line-height:12px;color:#5a5a5a;">→</div>
<svg class="r" style="left:530px;top:80.5px;" width="9.0" height="9.0" viewBox="0 0 9 9"><path d="M0.800 1.300h7.400l-.9 5.300-2.800 1.100-2.800-1.100M1.900 4.300h5.700" fill="none" stroke="#42a5f5" stroke-width="1.350" stroke-linejoin="miter"/></svg>
<div class="t" style="left:543px;top:79.00px;font-size:8px;line-height:12px;color:#a8a8a8;">app.wxss <span style="font-size:7px;">&gt;</span> ...</div>
<div class="r" style="left:487.5px;top:113px;width:312.5px;height:20px;background:#333333;"></div>
<div class="r" style="left:489.5px;top:154px;width:0.7px;height:81px;background:#3c3c3c;"></div>
<div class="r" style="left:489.5px;top:277px;width:0.7px;height:12px;background:#3c3c3c;"></div>
<div class="r" style="left:796px;top:204.5px;width:3px;height:3px;background:#d4a72c;"></div>
<div class="r" style="left:793.5px;top:80px;width:0.6px;height:209px;background:#2e2e2e;"></div>
<div class="r" style="left:447.500px;top:80px;width:352.500px;height:209px;overflow:hidden;">
<div class="t mono" style="left:0;width:24px;text-align:right;top:16.50px;font-size:9.200px;line-height:14px;color:#555555;">1</div>
<div class="t mono" style="left:40px;top:16.50px;font-size:9.350px;line-height:14px;white-space:pre;color:#ccc;"><span style="color:#6fc3e8;">@import</span> <span style="color:#8ad0f0;text-decoration:underline;text-decoration-color:#8ad0f0;text-decoration-thickness:0.7px;text-underline-offset:2px;">"</span><span style="color:#f07a6c;text-decoration:underline;text-decoration-color:#f07a6c;text-decoration-thickness:0.7px;text-underline-offset:2px;">colorui/main.wxss</span><span style="color:#8ad0f0;text-decoration:underline;text-decoration-color:#8ad0f0;text-decoration-thickness:0.7px;text-underline-offset:2px;">"</span><span style="color:#6fc3e8;">;</span></div>
<div class="t mono" style="left:0;width:24px;text-align:right;top:36.92px;font-size:9.200px;line-height:14px;color:#c6c6c6;">2</div>
<div class="t mono" style="left:40px;top:36.92px;font-size:9.350px;line-height:14px;white-space:pre;color:#ccc;"><span style="color:#6fc3e8;">@import</span> <span style="color:#8ad0f0;text-decoration:underline;text-decoration-color:#8ad0f0;text-decoration-thickness:0.7px;text-underline-offset:2px;">"</span><span style="color:#f07a6c;text-decoration:underline;text-decoration-color:#f07a6c;text-decoration-thickness:0.7px;text-underline-offset:2px;">colorui/icon.wxss</span><span style="color:#8ad0f0;text-decoration:underline;text-decoration-color:#8ad0f0;text-decoration-thickness:0.7px;text-underline-offset:2px;">"</span><span style="color:#6fc3e8;">;</span></div>
<div class="t mono" style="left:0;width:24px;text-align:right;top:57.34px;font-size:9.200px;line-height:14px;color:#555555;">3</div>
<div class="t mono" style="left:40px;top:57.34px;font-size:9.350px;line-height:14px;white-space:pre;color:#ccc;"><span style="color:#6fc3e8;">@font-face</span> <span style="color:#f0c419;">{</span></div>
<div class="t mono" style="left:0;width:24px;text-align:right;top:77.76px;font-size:9.200px;line-height:14px;color:#555555;">4</div>
<div class="t mono" style="left:40px;top:77.76px;font-size:9.350px;line-height:14px;white-space:pre;color:#ccc;">  <span style="color:#f5a052;">font-family</span><span style="color:#6fc3e8;">:</span> <span style="color:#f07a6c;">'FontAwesome'</span><span style="color:#6fc3e8;">;</span></div>
<div class="t mono" style="left:0;width:24px;text-align:right;top:98.18px;font-size:9.200px;line-height:14px;color:#555555;">5</div>
<div class="t mono" style="left:40px;top:98.18px;font-size:9.350px;line-height:14px;white-space:pre;color:#ccc;">  <span style="color:#f5a052;">src</span><span style="color:#6fc3e8;">:</span> <span style="color:#d0d0e8;">url</span><span style="color:#d872d8;">(</span><span style="color:#f07a6c;text-decoration:underline;text-decoration-color:#8ad0f0;text-decoration-thickness:0.7px;text-underline-offset:2px;">'FontAwesome.eot'</span><span style="color:#d872d8;">)</span><span style="color:#6fc3e8;">;</span></div>
<div class="t mono" style="left:0;width:24px;text-align:right;top:118.60px;font-size:9.200px;line-height:14px;color:#555555;">6</div>
<div class="t mono" style="left:40px;top:118.60px;font-size:9.350px;line-height:14px;white-space:pre;color:#ccc;">  <span style="color:#f5a052;">font-weight</span><span style="color:#6fc3e8;">:</span> <span style="color:#f07a6c;">normal</span><span style="color:#6fc3e8;">;</span></div>
<div class="t mono" style="left:0;width:24px;text-align:right;top:139.02px;font-size:9.200px;line-height:14px;color:#555555;">7</div>
<div class="t mono" style="left:40px;top:139.02px;font-size:9.350px;line-height:14px;white-space:pre;color:#ccc;">  <span style="color:#f5a052;">font-style</span><span style="color:#6fc3e8;">:</span> <span style="color:#f07a6c;">normal</span><span style="color:#6fc3e8;">;</span></div>
<div class="t mono" style="left:0;width:24px;text-align:right;top:159.44px;font-size:9.200px;line-height:14px;color:#555555;">8</div>
<div class="t mono" style="left:40px;top:159.44px;font-size:9.350px;line-height:14px;white-space:pre;color:#ccc;"><span style="color:#f0c419;">}</span></div>
<div class="t mono" style="left:0;width:24px;text-align:right;top:179.86px;font-size:9.200px;line-height:14px;color:#555555;">9</div>
<div class="t mono" style="left:40px;top:179.86px;font-size:9.350px;line-height:14px;white-space:pre;color:#ccc;"><span style="color:#6fc3e8;">@font-face</span> <span style="color:#f0c419;">{</span></div>
<div class="t mono" style="left:0;width:24px;text-align:right;top:200.28px;font-size:9.200px;line-height:14px;color:#555555;">10</div>
<div class="t mono" style="left:40px;top:200.28px;font-size:9.350px;line-height:14px;white-space:pre;color:#ccc;">  <span style="color:#f5a052;">font-family</span><span style="color:#6fc3e8;">:</span> <span style="color:#f07a6c;">'FontAwesome'</span><span style="color:#6fc3e8;">;</span></div>
</div>
<svg class="r" style="left:477px;top:136px;" width="6" height="4" viewBox="0 0 6 4"><path d="M0.500 0.500l2.500 2.500 2.500-2.500" fill="none" stroke="#9a9a9a" stroke-width="0.9"/></svg>
<svg class="r" style="left:477px;top:259px;" width="6" height="4" viewBox="0 0 6 4"><path d="M0.500 0.500l2.500 2.500 2.500-2.500" fill="none" stroke="#9a9a9a" stroke-width="0.9"/></svg>
<div class="r" style="left:447.5px;top:287px;width:352.5px;height:337px;background:#242424;box-shadow:0 -1px 3px rgba(0,0,0,.45);"></div>
<div class="t" style="left:461px;top:292.00px;font-size:7.2px;line-height:12px;color:#8a8a8a;">构建</div>
<div class="t" style="left:489px;top:292.00px;font-size:7.2px;line-height:12px;color:#f0f0f0;">调试器</div>
<div class="r" style="left:489px;top:305px;width:21px;height:1px;background:#d0d0d0;"></div>
<div class="r" style="left:514px;top:292.5px;width:22.5px;height:11px;background:#cf3535;border-radius:5.500px;"></div>
<div class="t" style="left:375.29999999999995px;width:300px;text-align:center;top:292.00px;font-size:7px;line-height:12px;color:#fff;">3, 19</div>
<div class="t" style="left:549px;top:292.00px;font-size:7.2px;line-height:12px;color:#8a8a8a;">问题</div>
<div class="r" style="left:568px;top:292.5px;width:12px;height:11px;background:#4a4a4a;border-radius:5.500px;"></div>
<div class="t" style="left:424px;width:300px;text-align:center;top:292.00px;font-size:7px;line-height:12px;color:#ddd;">5</div>
<div class="t" style="left:592px;top:292.00px;font-size:7.2px;line-height:12px;color:#8a8a8a;">输出</div>
<div class="t" style="left:619px;top:292.00px;font-size:7.2px;line-height:12px;color:#8a8a8a;">终端</div>
<div class="t" style="left:645px;top:292.00px;font-size:7.2px;line-height:12px;color:#8a8a8a;">代码质量</div>
<svg class="r" style="left:758.5px;top:295.5px;" width="7" height="5" viewBox="0 0 7 5"><path d="M0.500 4.200l3-3 3 3" fill="none" stroke="#ccc" stroke-width="0.9"/></svg>
<svg class="r" style="left:779.5px;top:294.5px;" width="7" height="7" viewBox="0 0 7 7"><path d="M0.700 0.700l5.600 5.600M6.300 0.700l-5.600 5.600" stroke="#ccc" stroke-width="0.9"/></svg>
<div class="r" style="left:447.5px;top:308px;width:352.5px;height:15px;background:#2c2c2c;"></div>
<svg class="r" style="left:454px;top:310.5px;" width="10" height="10" viewBox="0 0 10 10"><path d="M8.500 4v-2.500h-7.500v7h2.500" fill="none" stroke="#c8c8c8" stroke-width="0.8" stroke-dasharray="1.400 0.800"/><path d="M4.500 4.500l4.500 1.800-1.900.7 1.700 1.700-.7.700-1.700-1.700-.7 1.900z" fill="#c8c8c8"/></svg>
<div class="r" style="left:469.5px;top:311px;width:0.6px;height:9px;background:#555;"></div>
<div class="t" style="left:482px;top:309.50px;font-size:7.8px;line-height:12px;color:#dcdcdc;">Wxml</div>
<div class="t" style="left:517px;top:309.50px;font-size:7.8px;line-height:12px;color:#dcdcdc;">Console</div>
<div class="t" style="left:559px;top:309.50px;font-size:7.8px;line-height:12px;color:#dcdcdc;">Sources</div>
<div class="r" style="left:594px;top:308px;width:43px;height:15px;background:#000;"></div>
<div class="t" style="left:465.5px;width:300px;text-align:center;top:309.50px;font-size:7.8px;line-height:12px;color:#fff;">Network</div>
<div class="t" style="left:642.5px;top:308.60px;font-size:11.5px;line-height:12px;color:#c8c8c8;">»</div>
<svg class="r" style="left:702px;top:312.5px;" width="6" height="6" viewBox="0 0 6 6"><circle cx="3" cy="3" r="2.700" fill="#e8453c"/><path d="M1.900 1.900l2.200 2.200M4.100 1.900l-2.200 2.200" stroke="#fff" stroke-width="0.6"/></svg>
<div class="t" style="left:709.5px;top:309.50px;font-size:7.8px;line-height:12px;color:#dcdcdc;">3</div>
<svg class="r" style="left:718.5px;top:312px;" width="7" height="7" viewBox="0 0 7 7"><path d="M3.500 0.600l3.200 5.800h-6.400z" fill="#f4bd00"/><path d="M3.500 2.600v2M3.500 5.200v.6" stroke="#333" stroke-width="0.6"/></svg>
<div class="t" style="left:726.5px;top:309.50px;font-size:7.8px;line-height:12px;color:#dcdcdc;">19</div>
<div class="r" style="left:741.5px;top:311px;width:0.6px;height:9px;background:#555;"></div>
<svg class="r" style="left:748.5px;top:311px;" width="9" height="9" viewBox="0 0 10 10"><path d="M5 0.600l.9.200.3 1.200.9.500 1.100-.4.700.8-.5 1.100.4.900 1.100.4v1l-1.100.4-.4.900.5 1.100-.7.800-1.100-.4-.9.500-.3 1.200h-1.800l-.3-1.200-.9-.5-1.100.4-.7-.8.500-1.100-.4-.9-1.100-.4v-1l1.100-.4.400-.9-.5-1.100.7-.8 1.100.4.900-.5.300-1.200z" fill="#b8b8b8" transform="translate(0.500 -0.300) scale(0.900)"/><circle cx="5" cy="5" r="1.500" fill="#333"/></svg>
<div class="t" style="left:768.3px;top:309.50px;font-size:10px;line-height:12px;color:#c0c0c0;font-weight:700;">⋮</div>
<svg class="r" style="left:783px;top:311px;" width="10" height="9" viewBox="0 0 10 9"><rect x="2.500" y="0.800" width="6.700" height="5.400" fill="none" stroke="#b8b8b8" stroke-width="0.8"/><path d="M0.800 3v5.200h6.200" fill="none" stroke="#b8b8b8" stroke-width="0.8"/></svg>
<div class="r" style="left:447.5px;top:323px;width:352.5px;height:0.7px;background:#4a4a4a;"></div>
<div class="r" style="left:447.5px;top:323.7px;width:352.5px;height:64.3px;background:#292929;"></div>
<svg class="r" style="left:454.5px;top:328.5px;" width="8" height="8" viewBox="0 0 8 8"><circle cx="4" cy="4" r="3.700" fill="#ea4335"/></svg>
<svg class="r" style="left:473px;top:328.5px;" width="8" height="8" viewBox="0 0 8 8"><circle cx="4" cy="4" r="3.300" fill="none" stroke="#b0b0b0" stroke-width="0.9"/><path d="M1.700 1.700l4.600 4.600" stroke="#b0b0b0" stroke-width="0.9"/></svg>
<div class="r" style="left:488px;top:328px;width:0.6px;height:9px;background:#555;"></div>
<svg class="r" style="left:495.5px;top:328.5px;" width="9" height="8" viewBox="0 0 9 8"><path d="M0.600 0.600h7.800l-2.900 3.400v3.200l-2 .4v-3.600z" fill="none" stroke="#3b9cff" stroke-width="1"/><path d="M2.600 2.300h3.800" stroke="#3b9cff" stroke-width="0.800"/></svg>
<svg class="r" style="left:514px;top:328.5px;" width="9" height="9" viewBox="0 0 9 9"><circle cx="3.500" cy="3.500" r="2.700" fill="none" stroke="#b0b0b0" stroke-width="0.9"/><path d="M5.500 5.500l2.800 2.800" stroke="#b0b0b0" stroke-width="1"/></svg>
<div class="r" style="left:529px;top:328px;width:0.6px;height:9px;background:#555;"></div>
<div class="r" style="left:536.5px;top:329.2px;width:7px;height:7px;background:transparent;border:1px solid #6e6e6e;box-sizing:border-box;border-radius:1.5px;"></div>
<div class="t" style="left:548.3px;top:326.70px;font-size:7.4px;line-height:12px;color:#dcdcdc;">Preserve log</div>
<div class="r" style="left:597px;top:329.2px;width:7px;height:7px;background:transparent;border:1px solid #6e6e6e;box-sizing:border-box;border-radius:1.5px;"></div>
<div class="t" style="left:608.5px;top:326.70px;font-size:7.4px;line-height:12px;color:#dcdcdc;">Disable cache</div>
<div class="r" style="left:660.5px;top:328px;width:0.6px;height:9px;background:#555;"></div>
<div class="t" style="left:667.5px;top:326.70px;font-size:7.8px;line-height:12px;color:#dcdcdc;">Online</div>
<svg class="r" style="left:707px;top:331.5px;" width="5" height="3" viewBox="0 0 5 3"><path d="M0 0h5l-2.500 3z" fill="#9a9a9a"/></svg>
<div class="r" style="left:720.5px;top:328px;width:0.6px;height:9px;background:#555;"></div>
<svg class="r" style="left:727.5px;top:328.5px;" width="8" height="9" viewBox="0 0 8 9"><path d="M4 6.500v-5.500M1.500 3.500l2.500-2.500 2.500 2.500M0.800 8h6.400" fill="none" stroke="#b0b0b0" stroke-width="1"/></svg>
<svg class="r" style="left:745.5px;top:328.5px;" width="8" height="9" viewBox="0 0 8 9"><path d="M4 0.800v5.500M1.500 3.800l2.500 2.500 2.500-2.500M0.800 8h6.400" fill="none" stroke="#b0b0b0" stroke-width="1"/></svg>
<svg class="r" style="left:784px;top:328.5px;" width="9" height="9" viewBox="0 0 10 10"><path d="M5 0.600l.9.200.3 1.200.9.500 1.100-.4.700.8-.5 1.100.4.900 1.100.4v1l-1.100.4-.4.900.5 1.100-.7.800-1.100-.4-.9.500-.3 1.200h-1.800l-.3-1.200-.9-.5-1.100.4-.7-.8.500-1.100-.4-.9-1.100-.4v-1l1.100-.4.400-.9-.5-1.100.7-.8 1.100.4.900-.5.300-1.200z" fill="#b8b8b8" transform="translate(0.500 -0.300) scale(0.900)"/><circle cx="5" cy="5" r="1.500" fill="#333"/></svg>
<div class="r" style="left:447.5px;top:341.3px;width:352.5px;height:0.6px;background:#3c3c3c;"></div>
<div class="r" style="left:450px;top:344px;width:107px;height:11.5px;background:#222222;"></div>
<div class="t" style="left:453px;top:344.00px;font-size:7.6px;line-height:12px;color:#c8c8c8;">Filter</div>
<div class="r" style="left:564px;top:346.0px;width:7px;height:7px;background:transparent;border:1px solid #6e6e6e;box-sizing:border-box;border-radius:1.5px;"></div>
<div class="t" style="left:575.5px;top:343.50px;font-size:7.35px;line-height:12px;color:#dcdcdc;">Hide data URLs</div>
<div class="r" style="left:450.5px;top:359.5px;width:13px;height:12px;background:#5a5a5a;border-radius:3px;"></div>
<div class="t" style="left:307px;width:300px;text-align:center;top:359.50px;font-size:7.4px;line-height:12px;color:#8a8a8a;">All</div>
<div class="r" style="left:466.5px;top:361px;width:0.6px;height:9px;background:#3c3c3c;"></div>
<div class="t" style="left:471px;top:359.50px;font-size:7.8px;line-height:12px;color:#dcdcdc;">Cloud</div>
<div class="t" style="left:497px;top:359.50px;font-size:7.8px;line-height:12px;color:#dcdcdc;">XHR</div>
<div class="t" style="left:518.5px;top:359.50px;font-size:7.8px;line-height:12px;color:#dcdcdc;">JS</div>
<div class="t" style="left:532px;top:359.50px;font-size:7.8px;line-height:12px;color:#dcdcdc;">CSS</div>
<div class="t" style="left:551px;top:359.50px;font-size:7.8px;line-height:12px;color:#dcdcdc;">Img</div>
<div class="t" style="left:571px;top:359.50px;font-size:7.8px;line-height:12px;color:#dcdcdc;">Media</div>
<div class="t" style="left:597px;top:359.50px;font-size:7.8px;line-height:12px;color:#dcdcdc;">Font</div>
<div class="t" style="left:620.5px;top:359.50px;font-size:7.8px;line-height:12px;color:#dcdcdc;">Doc</div>
<div class="t" style="left:640px;top:359.50px;font-size:7.8px;line-height:12px;color:#dcdcdc;">WS</div>
<div class="t" style="left:657.5px;top:359.50px;font-size:7.8px;line-height:12px;color:#dcdcdc;">Manifest</div>
<div class="t" style="left:693px;top:359.50px;font-size:7.8px;line-height:12px;color:#dcdcdc;">Other</div>
<div class="r" style="left:454.5px;top:376.5px;width:7px;height:7px;background:transparent;border:1px solid #6e6e6e;box-sizing:border-box;border-radius:1.5px;"></div>
<div class="t" style="left:465.5px;top:374.00px;font-size:7.55px;line-height:12px;color:#dcdcdc;">Has blocked cookies</div>
<div class="r" style="left:541.5px;top:376.5px;width:7px;height:7px;background:transparent;border:1px solid #6e6e6e;box-sizing:border-box;border-radius:1.5px;"></div>
<div class="t" style="left:552.5px;top:374.00px;font-size:7.35px;line-height:12px;color:#dcdcdc;">Blocked Requests</div>
<div class="r" style="left:447.5px;top:388px;width:352.5px;height:50.5px;background:#1f1f1f;"></div>
<div class="r" style="left:447.5px;top:388px;width:352.5px;height:0.6px;background:#3c3c3c;"></div>
<div class="r" style="left:544.5px;top:388px;width:0.6px;height:50px;background:#3a3a3a;"></div>
<div class="t" style="left:243.0px;width:300px;text-align:right;top:389.00px;font-size:6.4px;line-height:12px;color:#e0e0e0;">5000 ms</div>
<div class="r" style="left:639px;top:388px;width:0.6px;height:50px;background:#3a3a3a;"></div>
<div class="t" style="left:337.5px;width:300px;text-align:right;top:389.00px;font-size:6.4px;line-height:12px;color:#e0e0e0;">10000 ms</div>
<div class="r" style="left:735px;top:388px;width:0.6px;height:50px;background:#3a3a3a;"></div>
<div class="t" style="left:433.5px;width:300px;text-align:right;top:389.00px;font-size:6.4px;line-height:12px;color:#e0e0e0;">15000 ms</div>
<div class="r" style="left:449.5px;top:403px;width:16px;height:1.0px;background:#b0b8b8;"></div>
<div class="r" style="left:449.5px;top:405px;width:11px;height:1.2px;background:#22b5a0;"></div>
<div class="r" style="left:455px;top:405px;width:1.6px;height:10px;background:#2f9fdd;"></div>
<div class="r" style="left:449.5px;top:414.5px;width:6px;height:1.2px;background:#22b573;"></div>
<div class="r" style="left:455.5px;top:414.5px;width:13px;height:1.2px;background:#2f9fdd;"></div>
<div class="r" style="left:748px;top:403px;width:8px;height:1.2px;background:#c0c0c0;"></div>
<div class="r" style="left:735.5px;top:414.5px;width:16px;height:1.2px;background:#22b573;"></div>
<div class="r" style="left:735.5px;top:418px;width:3px;height:2px;background:#35b8c8;"></div>
<div class="r" style="left:735.5px;top:411px;width:3px;height:1.2px;background:#2f8fdd;"></div>
<div class="r" style="left:447.5px;top:438.5px;width:352.5px;height:0.6px;background:#4a4a4a;"></div>
<div class="r" style="left:447.5px;top:439px;width:352.5px;height:17px;background:#2b2b2b;"></div>
<div class="t" style="left:451px;top:443.50px;font-size:7.8px;line-height:12px;color:#dcdcdc;">Name</div>
<div class="t" style="left:534.5px;top:443.50px;font-size:7.8px;line-height:12px;color:#dcdcdc;">Stat...</div>
<div class="t" style="left:559px;top:443.50px;font-size:7.8px;line-height:12px;color:#dcdcdc;">Type</div>
<div class="t" style="left:584px;top:443.50px;font-size:7.8px;line-height:12px;color:#dcdcdc;">Initiator</div>
<div class="t" style="left:625px;top:443.50px;font-size:7.8px;line-height:12px;color:#dcdcdc;">Size</div>
<div class="t" style="left:649.5px;top:443.50px;font-size:7.8px;line-height:12px;color:#dcdcdc;">Time</div>
<div class="t" style="left:673.5px;top:443.50px;font-size:7.8px;line-height:12px;color:#dcdcdc;">Waterfall</div>
<svg class="r" style="left:786.5px;top:447.5px;" width="5" height="4" viewBox="0 0 5 4"><path d="M0 4h5l-2.500-4z" fill="#8a8a8a"/></svg>
<div class="r" style="left:447.5px;top:456px;width:352.5px;height:0.6px;background:#4a4a4a;"></div>
<div class="r" style="left:447.500px;top:456.600px;width:352.500px;height:105.900px;overflow:hidden;">
<div class="r" style="left:0.0px;top:-2.900000000000034px;width:352.5px;height:13.4px;background:#292929;"></div>
<div class="r" style="left:6.0px;top:-0.20000000000004547px;width:8px;height:8px;background:#dfe6ee;"></div>
<div class="r" style="left:7.0px;top:2.7999999999999545px;width:6px;height:4px;background:#6b9bd1;"></div>
<div class="t" style="left:16.5px;top:-2.20px;font-size:7.6px;line-height:12px;color:#e0443a;">reset.png</div>
<div class="t" style="left:87.0px;top:-2.20px;font-size:7.6px;line-height:12px;color:#e0443a;">500</div>
<div class="t" style="left:111.5px;top:-2.20px;font-size:7.6px;line-height:12px;color:#e0443a;">text...</div>
<div class="t" style="left:136.5px;top:-2.20px;font-size:7.6px;line-height:12px;color:#e0443a;text-decoration:underline;">:13461/...</div>
<div class="t" style="left:177.5px;top:-2.20px;font-size:7.6px;line-height:12px;color:#e0443a;">516...</div>
<div class="t" style="left:202.0px;top:-2.20px;font-size:7.6px;line-height:12px;color:#e0443a;">116...</div>
<div class="r" style="left:334.5px;top:-0.20000000000004547px;width:1px;height:8px;background:#22b573;"></div>
<div class="r" style="left:335.5px;top:-0.20000000000004547px;width:1.5px;height:8px;background:#35b8c8;"></div>
<div class="r" style="left:0.0px;top:10.499999999999943px;width:352.5px;height:13.4px;background:#232323;"></div>
<div class="r" style="left:6.0px;top:12.699999999999932px;width:6.5px;height:9px;background:#f2f2f2;"></div>
<div class="t" style="left:16.5px;top:11.20px;font-size:7.6px;line-height:12px;color:#e4e4e4;">getcarslistindex</div>
<div class="t" style="left:87.0px;top:11.20px;font-size:7.6px;line-height:12px;color:#e4e4e4;">200</div>
<div class="t" style="left:111.5px;top:11.20px;font-size:7.6px;line-height:12px;color:#e4e4e4;">xhr</div>
<div class="t" style="left:136.5px;top:11.20px;font-size:7.6px;line-height:12px;color:#e4e4e4;text-decoration:underline;">index.js:1</div>
<div class="t" style="left:177.5px;top:11.20px;font-size:7.6px;line-height:12px;color:#9a9a9a;">2.4 ...</div>
<div class="t" style="left:202.0px;top:11.20px;font-size:7.6px;line-height:12px;color:#e4e4e4;">150...</div>
<div class="r" style="left:338.0px;top:13.199999999999932px;width:1px;height:8px;background:#22b573;"></div>
<div class="r" style="left:339.0px;top:13.199999999999932px;width:1.5px;height:8px;background:#35b8c8;"></div>
<div class="r" style="left:0.0px;top:23.899999999999977px;width:352.5px;height:13.4px;background:#292929;"></div>
<div class="r" style="left:6.0px;top:26.099999999999966px;width:6.5px;height:9px;background:#e8e8e8;"></div>
<div class="r" style="left:7.0px;top:28.599999999999966px;width:4.5px;height:4px;background:#6a5a4a;"></div>
<div class="t" style="left:16.5px;top:24.60px;font-size:7.6px;line-height:12px;color:#e4e4e4;">80f262481a57efd...</div>
<div class="t" style="left:87.0px;top:24.60px;font-size:7.6px;line-height:12px;color:#e4e4e4;">200</div>
<div class="t" style="left:111.5px;top:24.60px;font-size:7.6px;line-height:12px;color:#e4e4e4;">jpeg</div>
<div class="t" style="left:136.5px;top:24.60px;font-size:7.6px;line-height:12px;color:#e4e4e4;text-decoration:underline;">:13461/_...</div>
<div class="t" style="left:177.5px;top:24.60px;font-size:7.6px;line-height:12px;color:#9a9a9a;">(dis...</div>
<div class="t" style="left:202.0px;top:24.60px;font-size:7.6px;line-height:12px;color:#e4e4e4;">17 ...</div>
<div class="r" style="left:340.0px;top:26.599999999999966px;width:1.6px;height:8px;background:#2f8fdd;"></div>
<div class="r" style="left:0.0px;top:37.299999999999955px;width:352.5px;height:13.4px;background:#232323;"></div>
<div class="r" style="left:6.0px;top:39.49999999999994px;width:6.5px;height:9px;background:#e8e8e8;"></div>
<div class="r" style="left:7.0px;top:41.99999999999994px;width:4.5px;height:4px;background:#6a5a4a;"></div>
<div class="t" style="left:16.5px;top:38.00px;font-size:7.6px;line-height:12px;color:#e4e4e4;">d9169c25795747...</div>
<div class="t" style="left:87.0px;top:38.00px;font-size:7.6px;line-height:12px;color:#e4e4e4;">200</div>
<div class="t" style="left:111.5px;top:38.00px;font-size:7.6px;line-height:12px;color:#e4e4e4;">jpeg</div>
<div class="t" style="left:136.5px;top:38.00px;font-size:7.6px;line-height:12px;color:#e4e4e4;text-decoration:underline;">:13461/_...</div>
<div class="t" style="left:177.5px;top:38.00px;font-size:7.6px;line-height:12px;color:#9a9a9a;">(dis...</div>
<div class="t" style="left:202.0px;top:38.00px;font-size:7.6px;line-height:12px;color:#e4e4e4;">21 ...</div>
<div class="r" style="left:340.0px;top:39.99999999999994px;width:1.6px;height:8px;background:#2f8fdd;"></div>
<div class="r" style="left:0.0px;top:50.69999999999999px;width:352.5px;height:13.4px;background:#292929;"></div>
<div class="r" style="left:6.0px;top:52.89999999999998px;width:6.5px;height:9px;background:#e8e8e8;"></div>
<div class="r" style="left:7.0px;top:55.39999999999998px;width:4.5px;height:4px;background:#6a5a4a;"></div>
<div class="t" style="left:16.5px;top:51.40px;font-size:7.6px;line-height:12px;color:#e4e4e4;">4b377fe9a4b2d7...</div>
<div class="t" style="left:87.0px;top:51.40px;font-size:7.6px;line-height:12px;color:#e4e4e4;">200</div>
<div class="t" style="left:111.5px;top:51.40px;font-size:7.6px;line-height:12px;color:#e4e4e4;">jpeg</div>
<div class="t" style="left:136.5px;top:51.40px;font-size:7.6px;line-height:12px;color:#e4e4e4;text-decoration:underline;">:13461/_...</div>
<div class="t" style="left:177.5px;top:51.40px;font-size:7.6px;line-height:12px;color:#9a9a9a;">(dis...</div>
<div class="t" style="left:202.0px;top:51.40px;font-size:7.6px;line-height:12px;color:#e4e4e4;">24 ...</div>
<div class="r" style="left:340.0px;top:53.39999999999998px;width:1.6px;height:8px;background:#2f8fdd;"></div>
<div class="r" style="left:0.0px;top:64.09999999999991px;width:352.5px;height:13.4px;background:#232323;"></div>
<div class="r" style="left:6.0px;top:66.29999999999995px;width:6.5px;height:9px;background:#e8e8e8;"></div>
<div class="r" style="left:7.0px;top:68.79999999999995px;width:4.5px;height:4px;background:#6a5a4a;"></div>
<div class="t" style="left:16.5px;top:64.80px;font-size:7.6px;line-height:12px;color:#e4e4e4;">e2e7956aa7cc3c...</div>
<div class="t" style="left:87.0px;top:64.80px;font-size:7.6px;line-height:12px;color:#e4e4e4;">200</div>
<div class="t" style="left:111.5px;top:64.80px;font-size:7.6px;line-height:12px;color:#e4e4e4;">jpeg</div>
<div class="t" style="left:136.5px;top:64.80px;font-size:7.6px;line-height:12px;color:#e4e4e4;text-decoration:underline;">:13461/_...</div>
<div class="t" style="left:177.5px;top:64.80px;font-size:7.6px;line-height:12px;color:#9a9a9a;">(dis...</div>
<div class="t" style="left:202.0px;top:64.80px;font-size:7.6px;line-height:12px;color:#e4e4e4;">37 ...</div>
<div class="r" style="left:340.0px;top:66.79999999999995px;width:1.6px;height:8px;background:#2f8fdd;"></div>
<div class="r" style="left:0.0px;top:77.49999999999989px;width:352.5px;height:13.4px;background:#292929;"></div>
<div class="r" style="left:6.0px;top:79.69999999999993px;width:6.5px;height:9px;background:#f2f2f2;"></div>
<div class="r" style="left:7.0px;top:81.69999999999993px;width:4.5px;height:1.5px;background:#d0322d;"></div>
<div class="t" style="left:16.5px;top:78.20px;font-size:7.6px;line-height:12px;color:#e4e4e4;">9d10edb8589cc3...</div>
<div class="t" style="left:87.0px;top:78.20px;font-size:7.6px;line-height:12px;color:#e4e4e4;">200</div>
<div class="t" style="left:111.5px;top:78.20px;font-size:7.6px;line-height:12px;color:#e4e4e4;">jpeg</div>
<div class="t" style="left:136.5px;top:78.20px;font-size:7.6px;line-height:12px;color:#e4e4e4;text-decoration:underline;">:13461/_...</div>
<div class="t" style="left:177.5px;top:78.20px;font-size:7.6px;line-height:12px;color:#9a9a9a;">(dis...</div>
<div class="t" style="left:202.0px;top:78.20px;font-size:7.6px;line-height:12px;color:#e4e4e4;">273...</div>
<div class="r" style="left:340.5px;top:80.19999999999993px;width:1.6px;height:8px;background:#2f8fdd;"></div>
<div class="r" style="left:339.0px;top:81.19999999999993px;width:1.5px;height:6px;background:#35b8c8;"></div>
<div class="r" style="left:0.0px;top:90.89999999999986px;width:352.5px;height:13.4px;background:#232323;"></div>
<div class="r" style="left:6.0px;top:93.09999999999991px;width:6.5px;height:9px;background:#f2f2f2;"></div>
<div class="r" style="left:7.0px;top:95.09999999999991px;width:4.5px;height:1.5px;background:#d0322d;"></div>
<div class="t" style="left:16.5px;top:91.60px;font-size:7.6px;line-height:12px;color:#e4e4e4;">433bb33e0a30c2...</div>
<div class="t" style="left:87.0px;top:91.60px;font-size:7.6px;line-height:12px;color:#e4e4e4;">200</div>
<div class="t" style="left:111.5px;top:91.60px;font-size:7.6px;line-height:12px;color:#e4e4e4;">jpeg</div>
<div class="t" style="left:136.5px;top:91.60px;font-size:7.6px;line-height:12px;color:#e4e4e4;text-decoration:underline;">:13461/_...</div>
<div class="t" style="left:177.5px;top:91.60px;font-size:7.6px;line-height:12px;color:#9a9a9a;">(dis...</div>
<div class="t" style="left:202.0px;top:91.60px;font-size:7.6px;line-height:12px;color:#e4e4e4;">252...</div>
<div class="r" style="left:340.5px;top:93.59999999999991px;width:1.6px;height:8px;background:#2f8fdd;"></div>
<div class="r" style="left:339.0px;top:94.59999999999991px;width:1.5px;height:6px;background:#35b8c8;"></div>
</div>
<div class="r" style="left:532px;top:439px;width:0.6px;height:123.5px;background:#3e3e3e;"></div>
<div class="r" style="left:557px;top:439px;width:0.6px;height:123.5px;background:#3e3e3e;"></div>
<div class="r" style="left:582px;top:439px;width:0.6px;height:123.5px;background:#3e3e3e;"></div>
<div class="r" style="left:621.5px;top:439px;width:0.6px;height:123.5px;background:#3e3e3e;"></div>
<div class="r" style="left:646.5px;top:439px;width:0.6px;height:123.5px;background:#3e3e3e;"></div>
<div class="r" style="left:671.5px;top:439px;width:0.6px;height:123.5px;background:#3e3e3e;"></div>
<div class="r" style="left:745px;top:456px;width:0.5px;height:106.5px;background:#343434;"></div>
<div class="r" style="left:447.5px;top:562.5px;width:352.5px;height:15.5px;background:#2b2b2b;"></div>
<div class="r" style="left:447.5px;top:562.5px;width:352.5px;height:0.6px;background:#4a4a4a;"></div>
<div class="t" style="left:456px;top:564.00px;font-size:7.4px;line-height:12px;color:#dcdcdc;">47 requests</div>
<div class="r" style="left:499.5px;top:565.5px;width:0.6px;height:9px;background:#555;"></div>
<div class="t" style="left:506px;top:564.00px;font-size:7.4px;line-height:12px;color:#dcdcdc;">63.9 kB transferred</div>
<div class="r" style="left:577px;top:565.5px;width:0.6px;height:9px;background:#555;"></div>
<div class="t" style="left:584px;top:564.00px;font-size:7.4px;line-height:12px;color:#dcdcdc;">31.6 MB resources</div>
<div class="r" style="left:447.5px;top:577.5px;width:352.5px;height:0.7px;background:#4a4a4a;"></div>
<div class="r" style="left:447.5px;top:578px;width:352.5px;height:18px;background:#2c2c2c;"></div>
<div class="t" style="left:455px;top:581.50px;font-size:10px;line-height:12px;color:#c0c0c0;font-weight:700;">⋮</div>
<div class="r" style="left:467px;top:579px;width:39.5px;height:17px;background:#000;"></div>
<div class="t" style="left:336px;width:300px;text-align:center;top:582.00px;font-size:7.6px;line-height:12px;color:#fff;">Console</div>
<div class="t" style="left:512px;top:582.00px;font-size:7.6px;line-height:12px;color:#dcdcdc;">Task</div>
<svg class="r" style="left:785.5px;top:584.5px;" width="7" height="7" viewBox="0 0 7 7"><path d="M0.700 0.700l5.600 5.600M6.300 0.700l-5.600 5.600" stroke="#ccc" stroke-width="0.9"/></svg>
<div class="r" style="left:447.5px;top:596px;width:352.5px;height:0.6px;background:#4a4a4a;"></div>
<div class="r" style="left:447.5px;top:596.6px;width:352.5px;height:16.4px;background:#292929;"></div>
<svg class="r" style="left:453.5px;top:600.5px;" width="9" height="8" viewBox="0 0 9 8"><rect x="0.500" y="0.500" width="8" height="7" fill="none" stroke="#b0b0b0" stroke-width="0.8"/><path d="M3 2.300l2.600 1.700-2.600 1.700z" fill="#b0b0b0"/></svg>
<svg class="r" style="left:473px;top:600.5px;" width="8" height="8" viewBox="0 0 8 8"><circle cx="4" cy="4" r="3.300" fill="none" stroke="#b0b0b0" stroke-width="0.9"/><path d="M1.700 1.700l4.600 4.600" stroke="#b0b0b0" stroke-width="0.9"/></svg>
<div class="r" style="left:487.5px;top:600px;width:0.6px;height:9px;background:#555;"></div>
<div class="t" style="left:494.7px;top:598.90px;font-size:7.6px;line-height:12px;color:#dcdcdc;">top</div>
<svg class="r" style="left:573px;top:603.5px;" width="5" height="3" viewBox="0 0 5 3"><path d="M0 0h5l-2.500 3z" fill="#9a9a9a"/></svg>
<div class="r" style="left:583.5px;top:600px;width:0.6px;height:9px;background:#555;"></div>
<svg class="r" style="left:589px;top:600.5px;" width="11" height="9" viewBox="0 0 11 9"><path d="M0.300 4.500c2.300-4 8.100-4 10.400 0c-2.300 4-8.100 4-10.400 0z" fill="#b0b0b0"/><circle cx="5.500" cy="4.500" r="1.700" fill="#292929"/></svg>
<div class="r" style="left:603.5px;top:600px;width:0.6px;height:9px;background:#555;"></div>
<div class="r" style="left:609.5px;top:598.5px;width:64.5px;height:12px;background:#1f1f1f;border:1px solid #4a4a4a;box-sizing:border-box;"></div>
<div class="t" style="left:613.5px;top:598.70px;font-size:7.6px;line-height:12px;color:#c0c0c0;">Filter</div>
<div class="t" style="left:679px;top:598.70px;font-size:7.6px;line-height:12px;color:#dcdcdc;">Default levels</div>
<svg class="r" style="left:727.5px;top:603.5px;" width="5" height="3" viewBox="0 0 5 3"><path d="M0 0h5l-2.500 3z" fill="#9a9a9a"/></svg>
<div class="r" style="left:739.5px;top:600px;width:0.6px;height:9px;background:#555;"></div>
<div class="t" style="left:747px;top:598.70px;font-size:7.6px;line-height:12px;color:#c0c0c0;">2 hidden</div>
<svg class="r" style="left:784.5px;top:600px;" width="9" height="9" viewBox="0 0 10 10"><path d="M5 0.600l.9.200.3 1.200.9.500 1.100-.4.700.8-.5 1.100.4.900 1.100.4v1l-1.100.4-.4.900.5 1.100-.7.800-1.100-.4-.9.500-.3 1.200h-1.800l-.3-1.200-.9-.5-1.100.4-.7-.8.500-1.100-.4-.9-1.100-.4v-1l1.100-.4.400-.9-.5-1.100.7-.8 1.100.4.900-.5.300-1.200z" fill="#b8b8b8" transform="translate(0.500 -0.300) scale(0.900)"/><circle cx="5" cy="5" r="1.500" fill="#333"/></svg>
<div class="r" style="left:447.5px;top:613px;width:352.5px;height:0.6px;background:#3c3c3c;"></div>
<div class="r" style="left:447.5px;top:613.6px;width:352.5px;height:10.4px;background:#242424;"></div>
<div class="r" style="left:320px;top:621.7px;width:480px;height:18.3px;background:#303030;"></div>
<svg class="r" style="left:330.3px;top:626.7px;" width="9" height="9" viewBox="0 0 9 9"><circle cx="4.500" cy="4.500" r="3.900" fill="none" stroke="#9a9a9a" stroke-width="0.8"/><path d="M2.900 2.900l3.200 3.200M6.100 2.900l-3.200 3.200" stroke="#9a9a9a" stroke-width="0.8"/></svg>
<div class="t" style="left:341px;top:625.30px;font-size:8.2px;line-height:12px;color:#9a9a9a;">0</div>
<svg class="r" style="left:348.3px;top:626.5px;" width="9" height="9" viewBox="0 0 9 9"><path d="M4.500 0.900l3.900 7.100h-7.800z" fill="none" stroke="#9a9a9a" stroke-width="0.8"/><path d="M4.500 3.300v2.500M4.500 6.500v.7" stroke="#9a9a9a" stroke-width="0.7"/></svg>
<div class="t" style="left:359px;top:625.30px;font-size:8.2px;line-height:12px;color:#9a9a9a;">5</div>
<div class="t" style="left:621px;top:625.60px;font-size:7.4px;line-height:12px;color:#a0a0a0;">行 2, 列 1</div>
<div class="t" style="left:667px;top:625.60px;font-size:7.4px;line-height:12px;color:#a0a0a0;">制表符长度: 2</div>
<div class="t" style="left:723px;top:625.60px;font-size:7.4px;line-height:12px;color:#a0a0a0;">UTF-8</div>
<div class="t" style="left:755px;top:625.60px;font-size:7.4px;line-height:12px;color:#a0a0a0;">CRLF</div>
<div class="t" style="left:782px;top:625.60px;font-size:7.4px;line-height:12px;color:#a0a0a0;">CSS</div>
</body></html>
